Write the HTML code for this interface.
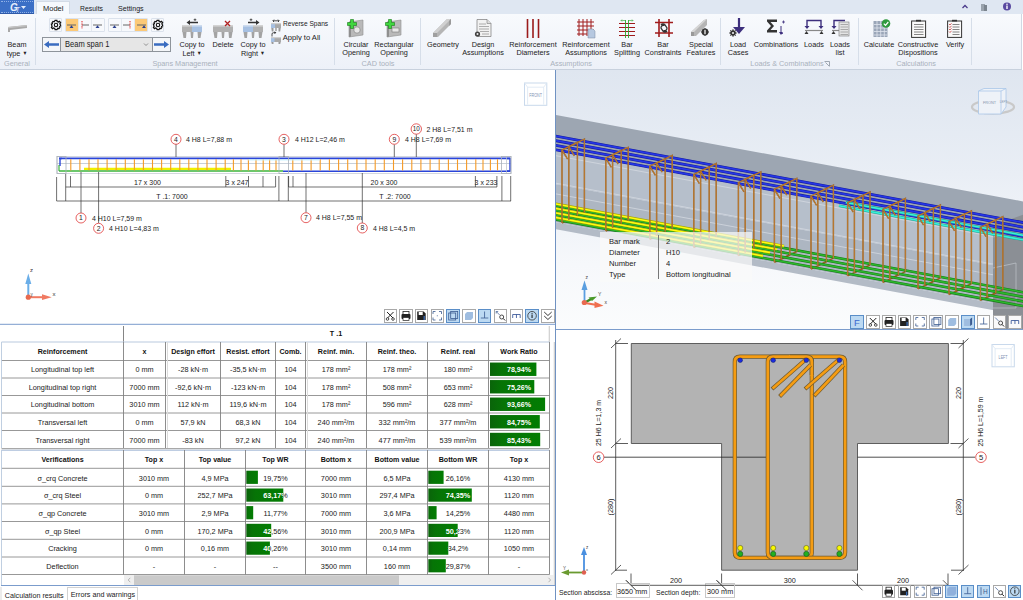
<!DOCTYPE html>
<html><head><meta charset="utf-8">
<style>
*{margin:0;padding:0;box-sizing:border-box}
html,body{width:1023px;height:600px;overflow:hidden;background:#fff;font-family:"Liberation Sans",sans-serif;color:#222}
.a{position:absolute}
.t{position:absolute;font-size:7.3px;white-space:nowrap;line-height:8px}
.c{transform:translateX(-50%) scaleX(0.9);text-align:center;font-size:8.1px}
svg{position:absolute;overflow:visible}

</style></head>
<body>
<div class="a" style="left:0;top:0;width:1023px;height:14px;background:#dfe7f2"></div>
<div class="a" style="left:0;top:0;width:34px;height:14px;background:#3b6fc6;border-bottom:1px solid #2f5aa8"></div>
<div class="a" style="left:1px;top:1px;width:32px;height:12px;border-top:1px dotted #8fb0e6;border-bottom:1px dotted #8fb0e6"></div>
<svg style="left:0;top:0" width="34" height="14"><text x="10" y="11" font-family="Liberation Sans" font-style="italic" font-weight="bold" font-size="10" fill="#e6eefc">G</text><text x="15.5" y="12" font-family="Liberation Sans" font-style="italic" font-size="7" fill="#e6eefc">T</text><path d="M21 6 L26 6 L23.5 9 Z" fill="#e6eefc"/></svg>
<div class="a" style="left:36px;top:1px;width:34px;height:14px;background:#f6f9fd;border:1px solid #d3dbe6;border-bottom:none"></div>
<div class="t" style="left:43px;top:5px;font-size:7.5px;color:#222">Model</div>
<div class="t" style="left:80px;top:5px;font-size:6.8px;letter-spacing:0.05px;color:#222">Results</div>
<div class="t" style="left:118px;top:5px;font-size:7.1px;color:#222">Settings</div>
<svg style="left:960px;top:2px" width="60" height="11"><path d="M2.5 6 L5 3.5 L7.5 6" stroke="#4a3a8a" stroke-width="1.3" fill="none"/><rect x="21" y="2" width="4" height="7" fill="#9aa3ad"/><rect x="24" y="3" width="3" height="6" fill="#7b848e"/><circle cx="47" cy="4.5" r="4" fill="#5a4aa0"/><rect x="46.3" y="3.5" width="1.4" height="3.5" fill="#fff"/><circle cx="47" cy="2.3" r="0.8" fill="#fff"/></svg>
<div class="a" style="left:0;top:14px;width:1022px;height:56px;background:linear-gradient(#f8fafd,#edf1f8);border-bottom:1px solid #c8d1dd;border-right:1px solid #d0d8e3"></div>
<div class="a" style="left:35px;top:18px;width:1px;height:47px;background:#d6dee9"></div>
<div class="a" style="left:334px;top:18px;width:1px;height:47px;background:#d6dee9"></div>
<div class="a" style="left:420px;top:18px;width:1px;height:47px;background:#d6dee9"></div>
<div class="a" style="left:720px;top:18px;width:1px;height:47px;background:#d6dee9"></div>
<div class="a" style="left:858px;top:18px;width:1px;height:47px;background:#d6dee9"></div>
<div class="a" style="left:971px;top:18px;width:1px;height:47px;background:#d6dee9"></div>
<div class="t c" style="left:17px;top:59px;color:#a9b1bc;margin-top:0.6px">General</div>
<div class="t c" style="left:185px;top:59px;color:#a9b1bc;margin-top:0.6px">Spans Management</div>
<div class="t c" style="left:378px;top:59px;color:#a9b1bc;margin-top:0.6px">CAD tools</div>
<div class="t c" style="left:571px;top:59px;color:#a9b1bc;margin-top:0.6px">Assumptions</div>
<div class="t c" style="left:787px;top:59px;color:#a9b1bc;margin-top:0.6px">Loads &amp; Combinations</div>
<svg style="left:824px;top:61px" width="6" height="6"><path d="M0.5 0.5 H5.5 V5.5" stroke="#8a94a0" stroke-width="0.8" fill="none"/><path d="M1.5 1.5 L5 5" stroke="#8a94a0" stroke-width="0.8"/></svg>
<div class="t c" style="left:916px;top:59px;color:#a9b1bc;margin-top:0.6px">Calculations</div>
<svg style="left:8px;top:24px" width="20" height="8"><path d="M0 3 L19 1 L19 4 L2 6 L2 8 L0 8 Z" fill="#a8a8a8"/><path d="M0 3 L19 1 L19 2.2 L0 4.2Z" fill="#c4c4c4"/></svg>
<div class="t c" style="left:17px;top:41px;">Beam</div>
<div class="t c" style="left:17px;top:48.8px;">type <span style="font-size:5.5px;vertical-align:1px">&#9660;</span></div>
<div class="a" style="left:49px;top:18px;width:13px;height:14px;background:#f7f9fc;border:1px solid #dbe2ec;border-radius:1px"></div>
<div class="a" style="left:65px;top:18px;width:40px;height:14px;background:#f7f9fc;border:1px solid #dbe2ec;border-radius:1px"></div>
<div class="a" style="left:66px;top:19px;width:12px;height:12px;background:#fcc977"></div>
<div class="a" style="left:78px;top:19px;width:1px;height:12px;background:#e3e8ef"></div>
<div class="a" style="left:91px;top:19px;width:1px;height:12px;background:#e3e8ef"></div>
<div class="a" style="left:108px;top:18px;width:40px;height:14px;background:#f7f9fc;border:1px solid #dbe2ec;border-radius:1px"></div>
<div class="a" style="left:135px;top:19px;width:12px;height:12px;background:#fcc977"></div>
<div class="a" style="left:121px;top:19px;width:1px;height:12px;background:#e3e8ef"></div>
<div class="a" style="left:134px;top:19px;width:1px;height:12px;background:#e3e8ef"></div>
<div class="a" style="left:151px;top:18px;width:13px;height:14px;background:#f7f9fc;border:1px solid #dbe2ec;border-radius:1px"></div>
<svg style="left:49.5px;top:18.5px" width="12" height="12" viewBox="-6 -6 12 12"><path d="M-0.9 -4.6 L0.9 -4.6 L1.2 -3.4 L2.3 -2.9 L3.4 -3.6 L4.6 -2.4 L3.9 -1.3 L4.3 -0.2 L4.6 0.9 L3.6 1.3 L3.9 2.4 L3.0 3.6 L1.9 3.3 L0.9 4.6 L-0.9 4.6 L-1.3 3.4 L-2.4 3.0 L-3.5 3.6 L-4.6 2.4 L-3.9 1.3 L-4.3 0.2 L-4.6 -0.9 L-3.6 -1.3 L-3.9 -2.4 L-3.0 -3.6 L-1.9 -3.2 Z" fill="none" stroke="#111" stroke-width="1.25"/><circle r="1.7" fill="none" stroke="#111" stroke-width="1.1"/></svg>
<svg style="left:151.5px;top:18.5px" width="12" height="12" viewBox="-6 -6 12 12"><path d="M-0.9 -4.6 L0.9 -4.6 L1.2 -3.4 L2.3 -2.9 L3.4 -3.6 L4.6 -2.4 L3.9 -1.3 L4.3 -0.2 L4.6 0.9 L3.6 1.3 L3.9 2.4 L3.0 3.6 L1.9 3.3 L0.9 4.6 L-0.9 4.6 L-1.3 3.4 L-2.4 3.0 L-3.5 3.6 L-4.6 2.4 L-3.9 1.3 L-4.3 0.2 L-4.6 -0.9 L-3.6 -1.3 L-3.9 -2.4 L-3.0 -3.6 L-1.9 -3.2 Z" fill="none" stroke="#111" stroke-width="1.25"/><circle r="1.7" fill="none" stroke="#111" stroke-width="1.1"/></svg>
<svg style="left:65px;top:19px" width="13" height="12"><path d="M2 6 H11" stroke="#666" stroke-width="1"/><path d="M4.5 9 L6.5 6.2 L8.5 9 Z" fill="#2a3f8f"/></svg>
<svg style="left:78px;top:19px" width="13" height="12"><path d="M4 6 H11" stroke="#666" stroke-width="1"/><path d="M4 2 V10" stroke="#e02020" stroke-width="1" stroke-dasharray="1 0.6"/></svg>
<svg style="left:91px;top:19px" width="13" height="12"><path d="M2 6 H11" stroke="#666" stroke-width="1"/><path d="M4.5 9 L6.5 6.2 L8.5 9 Z" fill="#2a3f8f"/></svg>
<svg style="left:108px;top:19px" width="13" height="12"><path d="M2 6 H11" stroke="#666" stroke-width="1"/><path d="M4.5 9 L6.5 6.2 L8.5 9 Z" fill="#2a3f8f"/></svg>
<svg style="left:121px;top:19px" width="13" height="12"><path d="M2 6 H9" stroke="#666" stroke-width="1"/><path d="M9 2 V10" stroke="#e02020" stroke-width="1" stroke-dasharray="1 0.6"/></svg>
<svg style="left:135px;top:19px" width="13" height="12"><path d="M2 6 H11" stroke="#666" stroke-width="1"/><path d="M7 9 L9 6.2 L11 9 Z" fill="#2a3f8f"/></svg>
<div class="a" style="left:42px;top:37px;width:129px;height:15px;border:1px solid #8e949b;background:#e6e6e6"></div>
<div class="a" style="left:43px;top:38px;width:18px;height:13px;background:#f4f6f9;border-right:1px solid #8e949b"></div>
<div class="a" style="left:152px;top:38px;width:18px;height:13px;background:#f4f6f9;border-left:1px solid #8e949b"></div>
<svg style="left:43px;top:38px" width="18" height="13"><path d="M1 6.5 L6 3 L6 5.3 L16 5.3 L16 7.7 L6 7.7 L6 10 Z" fill="#3a6cc0"/></svg>
<svg style="left:152px;top:38px" width="18" height="13"><path d="M17 6.5 L12 3 L12 5.3 L2 5.3 L2 7.7 L12 7.7 L12 10 Z" fill="#3a6cc0"/></svg>
<div class="t" style="left:65px;top:40.5px;font-size:8.2px;color:#222;transform:scaleX(0.92);transform-origin:0 0">Beam span 1</div>
<svg style="left:143px;top:42px" width="6" height="5"><path d="M1 1.5 L3 3.5 L5 1.5" stroke="#777" stroke-width="0.8" fill="none"/></svg>
<svg style="left:182px;top:19px" width="21" height="20"><rect x="0" y="6" width="20" height="7" fill="#b0b0b0"/><rect x="10" y="6" width="10" height="7" fill="#a6c0e2"/><rect x="0" y="6" width="20" height="1.6" fill="#fff" opacity="0.45"/><path d="M0.5 13 H4.5 L4 19 H1.5 Z" fill="#a3a3a3"/><path d="M8.5 13 H11.5 L11 19 H9 Z" fill="#a3a3a3"/><path d="M15.5 13 H19.5 L18.5 19 H16 Z" fill="#a3a3a3"/></svg>
<svg style="left:186px;top:18px" width="14" height="8"><path d="M0.5 4.5 L4 2 L4 3.8 L12 3.8 L12 5.2 L4 5.2 L4 7 Z" fill="#333"/><path d="M9 0.5 V3 M7.7 1.7 H10.3" stroke="#333" stroke-width="0.8"/></svg>
<svg style="left:213px;top:19px" width="21" height="20"><rect x="0" y="6" width="20" height="7" fill="#b0b0b0"/><rect x="0" y="6" width="20" height="1.6" fill="#fff" opacity="0.45"/><path d="M0.5 13 H4.5 L4 19 H1.5 Z" fill="#a3a3a3"/><path d="M8.5 13 H11.5 L11 19 H9 Z" fill="#a3a3a3"/><path d="M15.5 13 H19.5 L18.5 19 H16 Z" fill="#a3a3a3"/></svg>
<svg style="left:224px;top:20px" width="7" height="7"><path d="M1 1 L6 6 M6 1 L1 6" stroke="#b02020" stroke-width="1.3"/></svg>
<svg style="left:243px;top:19px" width="21" height="20"><rect x="0" y="6" width="20" height="7" fill="#b0b0b0"/><rect x="0" y="6" width="10" height="7" fill="#a6c0e2"/><rect x="0" y="6" width="20" height="1.6" fill="#fff" opacity="0.45"/><path d="M0.5 13 H4.5 L4 19 H1.5 Z" fill="#a3a3a3"/><path d="M8.5 13 H11.5 L11 19 H9 Z" fill="#a3a3a3"/><path d="M15.5 13 H19.5 L18.5 19 H16 Z" fill="#a3a3a3"/></svg>
<svg style="left:246px;top:18px" width="14" height="8"><path d="M13.5 4.5 L10 2 L10 3.8 L2 3.8 L2 5.2 L10 5.2 L10 7 Z" fill="#333"/><path d="M5 0.5 V3 M3.7 1.7 H6.3" stroke="#333" stroke-width="0.8"/></svg>
<div class="t c" style="left:192px;top:41px;">Copy to</div>
<div class="t c" style="left:192px;top:48.8px;">Left <span style="font-size:5.5px;vertical-align:1px">&#9660;</span></div>
<div class="t c" style="left:223px;top:41px;">Delete</div>
<div class="t c" style="left:253px;top:41px;">Copy to</div>
<div class="t c" style="left:253px;top:48.8px;">Right <span style="font-size:5.5px;vertical-align:1px">&#9660;</span></div>
<svg style="left:270px;top:18px" width="12" height="26"><rect x="1" y="6" width="10" height="4" fill="#a9a9a9"/><rect x="1" y="6" width="4" height="4" fill="#a6c0e2"/><rect x="1" y="5" width="10" height="1.2" fill="#cfcfcf"/><path d="M1.3 10 H3.5 V13.5 H1.8Z M8.5 10 H10.7 L10.2 13.5 H8.5Z M5.3 10 H6.7 V13 H5.3Z" fill="#9a9a9a"/><path d="M3 2.8 H9 M4 1.6 L2.8 2.8 L4 4 M8 1.6 L9.2 2.8 L8 4" stroke="#222" stroke-width="0.8" fill="none"/><rect x="1" y="20" width="10" height="4" fill="#a9a9a9"/><rect x="1" y="20" width="3.5" height="4" fill="#a6c0e2"/><rect x="1" y="19" width="10" height="1.2" fill="#cfcfcf"/><path d="M1.3 24 H3.5 V26 H1.8Z M8.5 24 H10.7 L10.2 26 H8.5Z" fill="#9a9a9a"/><path d="M2 18.5 V16 Q2 14.7 3.5 14.7 H5" stroke="#222" stroke-width="0.8" fill="none"/><path d="M4.5 13.3 L6.3 14.7 L4.5 16Z" fill="#222"/></svg>
<div class="t" style="left:282.5px;top:20px;font-size:7.6px;color:#222;transform:scaleX(0.87);transform-origin:0 0">Reverse Spans</div>
<div class="t" style="left:282.7px;top:33.5px;font-size:7.6px;color:#222">Apply to All</div>
<svg style="left:346px;top:19px" width="20" height="19"><path d="M3 3 L17 1 L17 16 L3 18 Z" fill="#b9b9b9" stroke="#8f8f8f" stroke-width="0.6"/><path d="M3 3 L5 2.5 L5 17.8 L3 18Z" fill="#8f8f8f"/><circle cx="11" cy="11" r="3.2" fill="#e8e8e8" stroke="#777" stroke-width="0.6"/><path d="M4.5 0.5 H7.5 V3.5 H10.5 V6.5 H7.5 V9.5 H4.5 V6.5 H1.5 V3.5 H4.5 Z" fill="#3fd63f" stroke="#1a7a1a" stroke-width="0.6"/></svg>
<svg style="left:384px;top:19px" width="20" height="19"><path d="M3 3 L17 1 L17 16 L3 18 Z" fill="#b9b9b9" stroke="#8f8f8f" stroke-width="0.6"/><path d="M3 3 L5 2.5 L5 17.8 L3 18Z" fill="#8f8f8f"/><rect x="8" y="9" width="7" height="4" fill="#e8e8e8" stroke="#777" stroke-width="0.6"/><path d="M4.5 0.5 H7.5 V3.5 H10.5 V6.5 H7.5 V9.5 H4.5 V6.5 H1.5 V3.5 H4.5 Z" fill="#3fd63f" stroke="#1a7a1a" stroke-width="0.6"/></svg>
<div class="t c" style="left:356px;top:41px;">Circular</div>
<div class="t c" style="left:356px;top:48.8px;">Opening</div>
<div class="t c" style="left:394px;top:41px;">Rectangular</div>
<div class="t c" style="left:394px;top:48.8px;">Opening</div>
<svg style="left:433px;top:19px" width="19" height="19"><path d="M0 14 L14 0 L18 0 L18 5 L5 18 L0 18Z" fill="#b5b5b5"/><path d="M0 14 L14 0 L18 0 L4 14 Z" fill="#d0d0d0"/><path d="M18 0 V5 L16 7 V2Z" fill="#9a9a9a"/><path d="M0 14 H4 V18 H0Z" fill="#a0a0a0"/></svg>
<div class="t c" style="left:443px;top:41px;">Geometry</div>
<svg style="left:474px;top:19px" width="20" height="19"><path d="M3 0.5 H13 L17 4.5 V17.5 H3 Z" fill="#f2f2f2" stroke="#7a7a7a" stroke-width="0.7"/><path d="M13 0.5 V4.5 H17" fill="#ddd" stroke="#7a7a7a" stroke-width="0.6"/><path d="M5 5 H12 M5 7.5 H15 M5 10 H15 M6 12.5 H15 M8 15 H15" stroke="#9a9a9a" stroke-width="0.8"/><circle cx="3.5" cy="15" r="2.6" fill="#444"/><circle cx="3.5" cy="15" r="1" fill="#eee"/></svg>
<div class="t c" style="left:483px;top:41px;">Design</div>
<div class="t c" style="left:483px;top:48.8px;">Assumptions</div>
<svg style="left:525px;top:19px" width="16" height="19"><path d="M2.5 0 V19 M8 0 V19 M13.5 0 V19" stroke="#9b1b1b" stroke-width="1.6"/></svg>
<div class="t c" style="left:533px;top:41px;">Reinforcement</div>
<div class="t c" style="left:533px;top:48.8px;">Diameters</div>
<svg style="left:577px;top:19px" width="19" height="19"><path d="M2 0 V17 M6 0 V17 M10 0 V17 M14 0 V12" stroke="#a01c1c" stroke-width="1"/><path d="M0 3 H17 M0 7 H17 M0 11 H17 M0 15 H10" stroke="#a01c1c" stroke-width="1"/><path d="M11 10 H16 L18 12 V19 H11Z" fill="#b6c8e0" stroke="#7a8aa0" stroke-width="0.5"/></svg>
<div class="t c" style="left:586px;top:41px;">Reinforcement</div>
<div class="t c" style="left:586px;top:48.8px;">Assumptions</div>
<svg style="left:618px;top:19px" width="19" height="19"><path d="M1 4.5 H17 M1 8.5 H17 M1 12.5 H17 M1 16.5 H17" stroke="#a01c1c" stroke-width="1"/><path d="M7.5 1 V19 M10.5 1 V19" stroke="#2aa82a" stroke-width="0.9"/><path d="M3 1.5 H7 M11 1.5 H15 M4 0.5 L3 1.5 L4 2.5 M14 0.5 L15 1.5 L14 2.5" stroke="#2aa82a" stroke-width="0.6" fill="none"/></svg>
<div class="t c" style="left:627px;top:41px;">Bar</div>
<div class="t c" style="left:627px;top:48.8px;">Splitting</div>
<svg style="left:655px;top:19px" width="19" height="19"><path d="M4 0 V18 M14 0 V18 M0 3.5 H18 M0 14 H18" stroke="#a01c1c" stroke-width="1.6"/><path d="M6 6 a2.5 2.5 0 0 1 4 0 l2 3 a2.5 2.5 0 0 1 -3.5 2.5 M12 12 a2.5 2.5 0 0 1 -4 0 l-2 -3 a2.5 2.5 0 0 1 3.5 -2.5" stroke="#333" stroke-width="1.3" fill="none"/></svg>
<div class="t c" style="left:663px;top:41px;">Bar</div>
<div class="t c" style="left:663px;top:48.8px;">Constraints</div>
<svg style="left:691px;top:19px" width="19" height="19"><path d="M0 13 L13 1 L16 0 L16 6 L5 17 L0 17Z" fill="#b5b5b5"/><path d="M0 13 L13 1 L16 0 L3 13Z" fill="#d6d6d6"/><path d="M0 13 H3 V17 H0Z" fill="#999"/><path d="M14 9 L18 13 L14 17 L10 13Z" fill="#333"/><circle cx="14" cy="13" r="3.4" fill="#333"/><rect x="13.4" y="10.8" width="1.2" height="4.4" fill="#fff"/></svg>
<div class="t c" style="left:701px;top:41px;">Special</div>
<div class="t c" style="left:701px;top:48.8px;">Features</div>
<svg style="left:728px;top:18px" width="20" height="20"><path d="M11 0 V10" stroke="#3d2f7d" stroke-width="2.2"/><path d="M5 9 H17 L11 16Z" fill="#3d2f7d"/><circle cx="5" cy="15" r="2.8" fill="#333"/><circle cx="5" cy="15" r="1.1" fill="#eee"/><path d="M5 11.2 V18.8 M1.2 15 H8.8 M2.3 12.3 L7.7 17.7 M7.7 12.3 L2.3 17.7" stroke="#333" stroke-width="1"/><circle cx="5" cy="15" r="1.1" fill="#eee"/></svg>
<div class="t c" style="left:738px;top:41px;">Load</div>
<div class="t c" style="left:738px;top:48.8px;">Cases</div>
<svg style="left:766px;top:18px" width="20" height="20"><path d="M1 1.5 H11 V4 H4.5 L8 8 L4.5 12 H11 V14.5 H1 V12.5 L5 8 L1 3.5Z" fill="#333"/><path d="M16 4 H19 M17.5 2.5 V5.5" stroke="#3d2f7d" stroke-width="0.8"/><path d="M14.5 15.5 H17" stroke="#3d2f7d" stroke-width="0.8"/><path d="M15 8 V15" stroke="#3d2f7d" stroke-width="1"/><path d="M13 14 H17 L15 17Z" fill="#3d2f7d"/></svg>
<div class="t c" style="left:776px;top:41px;">Combinations</div>
<svg style="left:804px;top:18px" width="20" height="20"><path d="M3 10 V2.5 H17 V10" stroke="#3d2f7d" stroke-width="1.4" fill="none"/><path d="M0.5 8 H5.5 L3 11Z M14.5 8 H19.5 L17 11Z" fill="#3d2f7d"/><path d="M1 12.5 H19" stroke="#888" stroke-width="1.2"/><path d="M0.5 16 L2.5 13 L4.5 16Z M15.5 16 L17.5 13 L19.5 16Z" fill="#333"/></svg>
<div class="t c" style="left:814px;top:41px;">Loads</div>
<svg style="left:831px;top:18px" width="20" height="20"><path d="M3 10 V2.5 H14" stroke="#3d2f7d" stroke-width="1.4" fill="none"/><path d="M0.5 8 H5.5 L3 11Z" fill="#3d2f7d"/><path d="M1 12.5 H9" stroke="#888" stroke-width="1.2"/><path d="M0.5 16 L2.5 13 L4.5 16Z" fill="#333"/><rect x="8" y="4" width="10" height="14" fill="#e4e4e4" stroke="#777" stroke-width="0.6"/><path d="M9.5 6.5 H17 M9.5 9 H17 M9.5 11.5 H17 M9.5 14 H17 M9.5 16.5 H17" stroke="#999" stroke-width="0.8"/></svg>
<div class="t c" style="left:840px;top:41px;">Loads</div>
<div class="t c" style="left:840px;top:48.8px;">list</div>
<svg style="left:873px;top:19px" width="18" height="19"><rect x="0.5" y="2" width="14" height="16" fill="#9aa6b8"/><path d="M1 5.5 H14 M1 9 H14 M1 12.5 H14 M1 16 H14 M4 2 V18 M7.7 2 V18 M11.3 2 V18" stroke="#dfe5ee" stroke-width="0.8"/><circle cx="13" cy="4.5" r="4.3" fill="#2e9a3e"/><path d="M10.8 4.6 L12.5 6.3 L15.3 3" stroke="#fff" stroke-width="1.2" fill="none"/></svg>
<div class="t c" style="left:879px;top:41px;">Calculate</div>
<svg style="left:911px;top:19px" width="16" height="19"><rect x="0.6" y="2" width="14" height="16.4" fill="#fafafa" stroke="#333" stroke-width="1"/><path d="M5 2.5 H10 V0.8 H5Z" fill="#333"/><path d="M3 5.5 H12.5" stroke="#777" stroke-width="0.9"/><path d="M3 8 H12.5" stroke="#777" stroke-width="0.9"/><path d="M3 10.5 H12.5" stroke="#777" stroke-width="0.9"/><path d="M3 13 H12.5" stroke="#777" stroke-width="0.9"/><path d="M3 15.5 H12.5" stroke="#777" stroke-width="0.9"/></svg>
<div class="t c" style="left:918px;top:41px;">Constructive</div>
<div class="t c" style="left:918px;top:48.8px;">Dispositions</div>
<svg style="left:947px;top:19px" width="16" height="19"><rect x="0.6" y="2" width="14" height="16.4" fill="#fafafa" stroke="#333" stroke-width="1"/><path d="M5 2.5 H10 V0.8 H5Z" fill="#333"/><path d="M5.5 5.5 H12.5" stroke="#777" stroke-width="0.9"/><path d="M2 5.0 L3 6.0 L4.5 4.3" stroke="#c02020" stroke-width="0.7" fill="none"/><path d="M5.5 8 H12.5" stroke="#777" stroke-width="0.9"/><path d="M2 7.5 L3 8.5 L4.5 6.8" stroke="#c02020" stroke-width="0.7" fill="none"/><path d="M5.5 10.5 H12.5" stroke="#777" stroke-width="0.9"/><path d="M2 10.0 L3 11.0 L4.5 9.3" stroke="#c02020" stroke-width="0.7" fill="none"/><path d="M5.5 13 H12.5" stroke="#777" stroke-width="0.9"/><path d="M2 12.5 L3 13.5 L4.5 11.8" stroke="#c02020" stroke-width="0.7" fill="none"/><path d="M5.5 15.5 H12.5" stroke="#777" stroke-width="0.9"/></svg>
<div class="t c" style="left:955px;top:41px;">Verify</div>
<div class="a" style="left:0;top:70px;width:555px;height:254px;background:#fff"></div>
<svg style="left:0;top:0" width="555" height="325" font-family="Liberation Sans"><rect x="57" y="156.5" width="454" height="17" fill="#fff" stroke="#c9ced6" stroke-width="0.8"/><path d="M57 163.5 H511" stroke="#b9c3cf" stroke-width="0.8"/><path d="M59 158.3 H510" stroke="#2a45d8" stroke-width="1.8"/><path d="M60 166 V158.5 H62" stroke="#2a45d8" stroke-width="1.4" fill="none"/><path d="M507 158.5 H510 V171 H507" stroke="#2a45d8" stroke-width="1.4" fill="none"/><path d="M84 168.9 H231" stroke="#f0f000" stroke-width="2.3"/><path d="M59 171 H283" stroke="#3cb43c" stroke-width="1.3"/><path d="M59 171 V165" stroke="#3cb43c" stroke-width="1.2"/><path d="M283 171.2 H510" stroke="#2a45d8" stroke-width="1.6"/><path d="M70.8 159.3 V170.4" stroke="#f59a25" stroke-width="1.1"/><path d="M79.9 159.3 V170.4" stroke="#f59a25" stroke-width="1.1"/><path d="M89.0 159.3 V170.4" stroke="#f59a25" stroke-width="1.1"/><path d="M98.0 159.3 V170.4" stroke="#f59a25" stroke-width="1.1"/><path d="M107.1 159.3 V170.4" stroke="#f59a25" stroke-width="1.1"/><path d="M116.2 159.3 V170.4" stroke="#f59a25" stroke-width="1.1"/><path d="M125.3 159.3 V170.4" stroke="#f59a25" stroke-width="1.1"/><path d="M134.4 159.3 V170.4" stroke="#f59a25" stroke-width="1.1"/><path d="M143.4 159.3 V170.4" stroke="#f59a25" stroke-width="1.1"/><path d="M152.5 159.3 V170.4" stroke="#f59a25" stroke-width="1.1"/><path d="M161.6 159.3 V170.4" stroke="#f59a25" stroke-width="1.1"/><path d="M170.7 159.3 V170.4" stroke="#f59a25" stroke-width="1.1"/><path d="M179.8 159.3 V170.4" stroke="#f59a25" stroke-width="1.1"/><path d="M188.8 159.3 V170.4" stroke="#f59a25" stroke-width="1.1"/><path d="M197.9 159.3 V170.4" stroke="#f59a25" stroke-width="1.1"/><path d="M207.0 159.3 V170.4" stroke="#f59a25" stroke-width="1.1"/><path d="M216.1 159.3 V170.4" stroke="#f59a25" stroke-width="1.1"/><path d="M225.2 159.3 V170.4" stroke="#f59a25" stroke-width="1.1"/><path d="M233.4 159.3 V170.4" stroke="#f59a25" stroke-width="1.1"/><path d="M241.0 159.3 V170.4" stroke="#f59a25" stroke-width="1.1"/><path d="M248.4 159.3 V170.4" stroke="#f59a25" stroke-width="1.1"/><path d="M256.0 159.3 V170.4" stroke="#f59a25" stroke-width="1.1"/><path d="M263.2 159.3 V170.4" stroke="#f59a25" stroke-width="1.1"/><path d="M269.6 159.3 V170.4" stroke="#f59a25" stroke-width="1.1"/><path d="M276.0 159.3 V170.4" stroke="#f59a25" stroke-width="1.1"/><path d="M292.8 159.3 V170.4" stroke="#f59a25" stroke-width="1.1"/><path d="M301.9 159.3 V170.4" stroke="#f59a25" stroke-width="1.1"/><path d="M311.1 159.3 V170.4" stroke="#f59a25" stroke-width="1.1"/><path d="M320.2 159.3 V170.4" stroke="#f59a25" stroke-width="1.1"/><path d="M329.4 159.3 V170.4" stroke="#f59a25" stroke-width="1.1"/><path d="M338.6 159.3 V170.4" stroke="#f59a25" stroke-width="1.1"/><path d="M347.7 159.3 V170.4" stroke="#f59a25" stroke-width="1.1"/><path d="M356.9 159.3 V170.4" stroke="#f59a25" stroke-width="1.1"/><path d="M366.0 159.3 V170.4" stroke="#f59a25" stroke-width="1.1"/><path d="M375.2 159.3 V170.4" stroke="#f59a25" stroke-width="1.1"/><path d="M384.3 159.3 V170.4" stroke="#f59a25" stroke-width="1.1"/><path d="M393.5 159.3 V170.4" stroke="#f59a25" stroke-width="1.1"/><path d="M402.6 159.3 V170.4" stroke="#f59a25" stroke-width="1.1"/><path d="M411.8 159.3 V170.4" stroke="#f59a25" stroke-width="1.1"/><path d="M420.9 159.3 V170.4" stroke="#f59a25" stroke-width="1.1"/><path d="M430.1 159.3 V170.4" stroke="#f59a25" stroke-width="1.1"/><path d="M439.2 159.3 V170.4" stroke="#f59a25" stroke-width="1.1"/><path d="M448.4 159.3 V170.4" stroke="#f59a25" stroke-width="1.1"/><path d="M457.5 159.3 V170.4" stroke="#f59a25" stroke-width="1.1"/><path d="M466.6 159.3 V170.4" stroke="#f59a25" stroke-width="1.1"/><path d="M475.8 159.3 V170.4" stroke="#f59a25" stroke-width="1.1"/><path d="M483.0 159.3 V170.4" stroke="#f59a25" stroke-width="1.1"/><path d="M490.4 159.3 V170.4" stroke="#f59a25" stroke-width="1.1"/><path d="M497.5 159.3 V170.4" stroke="#f59a25" stroke-width="1.1"/><path d="M248 159.9 H320" stroke="#bfefff" stroke-width="1"/><rect x="57" y="156.5" width="9" height="17" fill="none" stroke="#a9b0b8" stroke-width="0.8"/><rect x="279" y="156.5" width="9.5" height="17" fill="none" stroke="#a9b0b8" stroke-width="0.8"/><rect x="501.5" y="156.5" width="9.5" height="17" fill="none" stroke="#a9b0b8" stroke-width="0.8"/><path d="M506.5 157 V173" stroke="#b9c0c8" stroke-width="0.7"/><path d="M65.7 187 H275.6 M288.6 187 H497 M56.6 201 H511" stroke="#333" stroke-width="0.7" fill="none"/><path d="M56.6 177 V201" stroke="#333" stroke-width="0.7"/><path d="M65.7 174 V201" stroke="#333" stroke-width="0.7"/><path d="M70.5 176 V187" stroke="#333" stroke-width="0.7"/><path d="M225.8 176 V187" stroke="#333" stroke-width="0.7"/><path d="M248.5 176 V187" stroke="#333" stroke-width="0.7"/><path d="M263 176 V187" stroke="#333" stroke-width="0.7"/><path d="M275.6 176 V187" stroke="#333" stroke-width="0.7"/><path d="M278.9 176 V201" stroke="#333" stroke-width="0.7"/><path d="M288.3 176 V201" stroke="#333" stroke-width="0.7"/><path d="M288.6 176 V187" stroke="#333" stroke-width="0.7"/><path d="M293 176 V187" stroke="#333" stroke-width="0.7"/><path d="M475.4 176 V187" stroke="#333" stroke-width="0.7"/><path d="M496.9 176 V187" stroke="#333" stroke-width="0.7"/><path d="M501.9 176 V201" stroke="#333" stroke-width="0.7"/><path d="M510.7 176 V201" stroke="#333" stroke-width="0.7"/><text transform="translate(147.5,184.7) scale(0.946,1)" font-size="7.4" text-anchor="middle" fill="#222">17 x 300</text><text transform="translate(237,184.7) scale(0.946,1)" font-size="7.4" text-anchor="middle" fill="#222">3 x 247</text><text transform="translate(172,198.7) scale(0.946,1)" font-size="7.4" text-anchor="middle" fill="#222">T .1: 7000</text><text transform="translate(384,184.7) scale(0.946,1)" font-size="7.4" text-anchor="middle" fill="#222">20 x 300</text><text transform="translate(486,184.7) scale(0.946,1)" font-size="7.4" text-anchor="middle" fill="#222">3 x 233</text><text transform="translate(395,198.7) scale(0.946,1)" font-size="7.4" text-anchor="middle" fill="#222">T .2: 7000</text><path d="M176 144 V157 M284 144.5 V157 M394.3 144.5 V157 M416.3 134 V157" stroke="#333" stroke-width="0.7"/><path d="M81 172 V213 M98.6 172 V223 M306 173 V212.5 M362.3 173 V223" stroke="#333" stroke-width="0.7"/><circle cx="176" cy="139.3" r="5" fill="#fff" stroke="#e03a3a" stroke-width="0.8"/><text x="176" y="141.70000000000002" font-size="6.8" text-anchor="middle" fill="#222">4</text><text transform="translate(186,142.0) scale(0.946,1)" font-size="7.4" fill="#222">4 H8 L=7,88 m</text><circle cx="284" cy="139.3" r="5" fill="#fff" stroke="#e03a3a" stroke-width="0.8"/><text x="284" y="141.70000000000002" font-size="6.8" text-anchor="middle" fill="#222">3</text><text transform="translate(295,142.0) scale(0.946,1)" font-size="7.4" fill="#222">4 H12 L=2,46 m</text><circle cx="394.3" cy="139.3" r="5" fill="#fff" stroke="#e03a3a" stroke-width="0.8"/><text x="394.3" y="141.70000000000002" font-size="6.8" text-anchor="middle" fill="#222">9</text><text transform="translate(405,142.0) scale(0.946,1)" font-size="7.4" fill="#222">4 H8 L=7,69 m</text><circle cx="416.3" cy="129" r="5.2" fill="#fff" stroke="#e03a3a" stroke-width="0.8"/><text x="416.3" y="131.4" font-size="6.3" text-anchor="middle" fill="#222">10</text><text transform="translate(426.5,131.7) scale(0.946,1)" font-size="7.4" fill="#222">2 H8 L=7,51 m</text><circle cx="81" cy="218" r="5" fill="#fff" stroke="#e03a3a" stroke-width="0.8"/><text x="81" y="220.4" font-size="6.8" text-anchor="middle" fill="#222">1</text><text transform="translate(92,220.7) scale(0.946,1)" font-size="7.4" fill="#222">4 H10 L=7,59 m</text><circle cx="98.6" cy="228.3" r="5" fill="#fff" stroke="#e03a3a" stroke-width="0.8"/><text x="98.6" y="230.70000000000002" font-size="6.8" text-anchor="middle" fill="#222">2</text><text transform="translate(109,231.0) scale(0.946,1)" font-size="7.4" fill="#222">4 H10 L=4,83 m</text><circle cx="306" cy="217.7" r="5" fill="#fff" stroke="#e03a3a" stroke-width="0.8"/><text x="306" y="220.1" font-size="6.8" text-anchor="middle" fill="#222">7</text><text transform="translate(316,220.39999999999998) scale(0.946,1)" font-size="7.4" fill="#222">4 H8 L=7,55 m</text><circle cx="362.3" cy="228" r="5" fill="#fff" stroke="#e03a3a" stroke-width="0.8"/><text x="362.3" y="230.4" font-size="6.8" text-anchor="middle" fill="#222">8</text><text transform="translate(373,230.7) scale(0.946,1)" font-size="7.4" fill="#222">4 H8 L=4,5 m</text><path d="M28.3 296 V283" stroke="#6aaee8" stroke-width="2"/><path d="M25.3 284 L28.3 273.5 L31.3 284Z" fill="#6aaee8"/><path d="M29 297.2 H43" stroke="#f07a62" stroke-width="2"/><path d="M42 294.3 L51.7 297.2 L42 300Z" fill="#f07a62"/><circle cx="28.3" cy="297.2" r="2.6" fill="#e8694e"/><text x="30" y="272" font-size="6" fill="#333">z</text><text x="52.5" y="296" font-size="6" fill="#333">x</text><text x="30.5" y="295.5" font-size="4.5" fill="#444">y</text><rect x="524.5" y="83" width="22.3" height="22.3" fill="#fff" stroke="#c9d9ec" stroke-width="1"/><path d="M527.6 87.2 H543.7 V104.5 M527.6 87.2 V104.5 M524.5 83 L527.6 87.2 M546.8 83 L543.7 87.2" fill="none" stroke="#dbe6f3" stroke-width="0.8"/><text x="535.6" y="97.3" font-size="4.6" text-anchor="middle" fill="#7f93b3" transform="translate(535.6,0) scale(0.8,1) translate(-535.6,0)">FRONT</text></svg>
<div class="a" style="left:383.5px;top:309px;width:13.5px;height:13.5px;background:#fff;border:1px solid #a8a8a8"></div>
<div class="a" style="left:399px;top:309px;width:13.5px;height:13.5px;background:#fff;border:1px solid #a8a8a8"></div>
<div class="a" style="left:414.7px;top:309px;width:13.5px;height:13.5px;background:#fff;border:1px solid #a8a8a8"></div>
<div class="a" style="left:430.5px;top:309px;width:13.5px;height:13.5px;background:#fff;border:1px solid #a8a8a8"></div>
<div class="a" style="left:446.2px;top:309px;width:13.5px;height:13.5px;background:#bcd9f2;border:1px solid #5a8ec8"></div>
<div class="a" style="left:462px;top:309px;width:13.5px;height:13.5px;background:#fff;border:1px solid #a8a8a8"></div>
<div class="a" style="left:477.8px;top:309px;width:13.5px;height:13.5px;background:#bcd9f2;border:1px solid #5a8ec8"></div>
<div class="a" style="left:493.7px;top:309px;width:13.5px;height:13.5px;background:#fff;border:1px solid #a8a8a8"></div>
<div class="a" style="left:509.7px;top:309px;width:13.5px;height:13.5px;background:#fff;border:1px solid #a8a8a8"></div>
<div class="a" style="left:525.3px;top:309px;width:13.5px;height:13.5px;background:#bcd9f2;border:1px solid #5a8ec8"></div>
<div class="a" style="left:541.2px;top:309px;width:13.5px;height:13.5px;background:#fff;border:1px solid #a8a8a8"></div>
<svg style="left:0;top:0" width="560" height="330"><path d="M387.0 312 L393.0 318 M393.5 312 L387.5 318" stroke="#222" stroke-width="1"/><circle cx="387.5" cy="319" r="1.3" fill="none" stroke="#222" stroke-width="0.8"/><circle cx="393.0" cy="319" r="1.3" fill="none" stroke="#222" stroke-width="0.8"/><rect x="401.5" y="314" width="9" height="5" rx="1" fill="#222"/><rect x="403" y="311.5" width="6" height="3" fill="none" stroke="#222" stroke-width="0.8"/><rect x="403" y="317.5" width="6" height="3" fill="#fff" stroke="#222" stroke-width="0.7"/><path d="M417.2 311.5 H423.7 L425.7 313.5 V320 H417.2Z" fill="#222"/><rect x="418.7" y="312" width="4" height="3" fill="#fff"/><path d="M424.2 316 V320" stroke="#3a70c0" stroke-width="1.2"/><path d="M433.0 314 V311.5 H435.5 M439.0 311.5 H441.5 V314 M441.5 317.5 V320 H439.0 M435.5 320 H433.0 V317.5" stroke="#3a5a90" stroke-width="0.8" fill="none"/><circle cx="437.25" cy="315.75" r="0.5" fill="#3a5a90"/><rect x="448.7" y="313" width="7" height="7" fill="none" stroke="#3a5a90" stroke-width="0.8"/><rect x="450.7" y="311.5" width="7" height="7" fill="none" stroke="#3a5a90" stroke-width="0.8"/><path d="M465 314 L467 312 H473 V318 L471 320 H465Z" fill="#9fbde0"/><path d="M484.55 311.5 V318 M480.8 318 H488.3" stroke="#3a5a90" stroke-width="0.8"/><path d="M496.2 311.5 L499.7 315 M496.2 311.5 H498.2 M496.2 311.5 V313.5" stroke="#3a5a90" stroke-width="0.7" fill="none"/><circle cx="501.7" cy="317" r="2" fill="none" stroke="#222" stroke-width="0.8"/><path d="M503.2 318.5 L505.2 320.5" stroke="#222" stroke-width="1"/><path d="M512.7 318 V314.5 H520.2 V318 M516.45 314.5 V318" stroke="#2a4a90" stroke-width="0.8" fill="none"/><circle cx="532.05" cy="315.75" r="4.3" fill="none" stroke="#333" stroke-width="0.8"/><rect x="531.5" y="314.5" width="1.1" height="3.5" fill="#222"/><circle cx="532.05" cy="313.3" r="0.6" fill="#222"/><path d="M544.2 312 L547.95 315.5 L551.7 312 M544.2 316 L547.95 319.5 L551.7 316" stroke="#222" stroke-width="0.9" fill="none"/></svg>
<div class="a" style="left:0;top:323.5px;width:555px;height:1px;background:#7b9ccc"></div>
<svg style="left:0;top:0" width="556" height="600" font-family="Liberation Sans"><rect x="0" y="324" width="555" height="276" fill="#fff"/><path d="M0 324.3 H555" stroke="#7b9ccc" stroke-width="1"/><path d="M123.5 326 V342" stroke="#777" stroke-width="0.9"/><path d="M549.3 326 V342" stroke="#cfcfcf" stroke-width="1.2"/><path d="M554.3 342 V585" stroke="#b8b8b8" stroke-width="0.8"/><text x="336" y="335.5" font-size="7.2" font-weight="bold" text-anchor="middle" fill="#111">T .1</text><path d="M1.5 342 H549.5" stroke="#b9c9de" stroke-width="1"/><path d="M1.5 360.5 H549.5" stroke="#8c8c8c" stroke-width="0.9"/><path d="M1.5 378 H549.5" stroke="#8c8c8c" stroke-width="0.9"/><path d="M1.5 395.5 H549.5" stroke="#8c8c8c" stroke-width="0.9"/><path d="M1.5 413 H549.5" stroke="#8c8c8c" stroke-width="0.9"/><path d="M1.5 430.5 H549.5" stroke="#8c8c8c" stroke-width="0.9"/><path d="M1.5 448.6 H549.5" stroke="#a8a8a8" stroke-width="1.2"/><path d="M1.5 342 V448" stroke="#b9c9de" stroke-width="0.9"/><path d="M123.5 342 V448" stroke="#808080" stroke-width="0.9"/><path d="M165.5 342 V448" stroke="#808080" stroke-width="0.9"/><path d="M220.5 342 V448" stroke="#808080" stroke-width="0.9"/><path d="M275.5 342 V448" stroke="#808080" stroke-width="0.9"/><path d="M305.5 342 V448" stroke="#808080" stroke-width="0.9"/><path d="M366.5 342 V448" stroke="#808080" stroke-width="0.9"/><path d="M427.5 342 V448" stroke="#808080" stroke-width="0.9"/><path d="M488.5 342 V448" stroke="#808080" stroke-width="0.9"/><path d="M549.5 342 V448" stroke="#808080" stroke-width="0.9"/><path d="M167.5 342 V448" stroke="#dcdcdc" stroke-width="1"/><path d="M307.5 342 V448" stroke="#dcdcdc" stroke-width="1"/><text x="62.5" y="353.85" font-size="7.1" font-weight="bold" text-anchor="middle" fill="#111">Reinforcement</text><text x="144.5" y="353.85" font-size="7.1" font-weight="bold" text-anchor="middle" fill="#111">x</text><text x="193.0" y="353.85" font-size="7.1" font-weight="bold" text-anchor="middle" fill="#111">Design effort</text><text x="248.0" y="353.85" font-size="7.1" font-weight="bold" text-anchor="middle" fill="#111">Resist. effort</text><text x="290.5" y="353.85" font-size="7.1" font-weight="bold" text-anchor="middle" fill="#111">Comb.</text><text x="336.0" y="353.85" font-size="7.1" font-weight="bold" text-anchor="middle" fill="#111">Reinf. min.</text><text x="397.0" y="353.85" font-size="7.1" font-weight="bold" text-anchor="middle" fill="#111">Reinf. theo.</text><text x="458.0" y="353.85" font-size="7.1" font-weight="bold" text-anchor="middle" fill="#111">Reinf. real</text><text x="519.0" y="353.85" font-size="7.1" font-weight="bold" text-anchor="middle" fill="#111">Work Ratio</text><text transform="translate(62.5,372.45) scale(0.9,1)" font-size="8.1" text-anchor="middle" fill="#1a1a1a">Longitudinal top left</text><text transform="translate(144.5,372.45) scale(0.9,1)" font-size="8.1" text-anchor="middle" fill="#1a1a1a">0 mm</text><text transform="translate(193.0,372.45) scale(0.9,1)" font-size="8.1" text-anchor="middle" fill="#1a1a1a">-28 kN·m</text><text transform="translate(248.0,372.45) scale(0.9,1)" font-size="8.1" text-anchor="middle" fill="#1a1a1a">-35,5 kN·m</text><text transform="translate(290.5,372.45) scale(0.9,1)" font-size="8.1" text-anchor="middle" fill="#1a1a1a">104</text><text transform="translate(336.0,372.45) scale(0.9,1)" font-size="8.1" text-anchor="middle" fill="#1a1a1a">178 mm²</text><text transform="translate(397.0,372.45) scale(0.9,1)" font-size="8.1" text-anchor="middle" fill="#1a1a1a">178 mm²</text><text transform="translate(458.0,372.45) scale(0.9,1)" font-size="8.1" text-anchor="middle" fill="#1a1a1a">180 mm²</text><rect x="490" y="362.55" width="46.4" height="13.4" fill="url(#gbar)"/><text transform="translate(519.0,372.25) scale(0.9,1)" font-size="7.9" font-weight="bold" text-anchor="middle" fill="#fff">78,94%</text><text transform="translate(62.5,389.95) scale(0.9,1)" font-size="8.1" text-anchor="middle" fill="#1a1a1a">Longitudinal top right</text><text transform="translate(144.5,389.95) scale(0.9,1)" font-size="8.1" text-anchor="middle" fill="#1a1a1a">7000 mm</text><text transform="translate(193.0,389.95) scale(0.9,1)" font-size="8.1" text-anchor="middle" fill="#1a1a1a">-92,6 kN·m</text><text transform="translate(248.0,389.95) scale(0.9,1)" font-size="8.1" text-anchor="middle" fill="#1a1a1a">-123 kN·m</text><text transform="translate(290.5,389.95) scale(0.9,1)" font-size="8.1" text-anchor="middle" fill="#1a1a1a">104</text><text transform="translate(336.0,389.95) scale(0.9,1)" font-size="8.1" text-anchor="middle" fill="#1a1a1a">178 mm²</text><text transform="translate(397.0,389.95) scale(0.9,1)" font-size="8.1" text-anchor="middle" fill="#1a1a1a">508 mm²</text><text transform="translate(458.0,389.95) scale(0.9,1)" font-size="8.1" text-anchor="middle" fill="#1a1a1a">653 mm²</text><rect x="490" y="380.05" width="44.3" height="13.4" fill="url(#gbar)"/><text transform="translate(519.0,389.75) scale(0.9,1)" font-size="7.9" font-weight="bold" text-anchor="middle" fill="#fff">75,26%</text><text transform="translate(62.5,407.45) scale(0.9,1)" font-size="8.1" text-anchor="middle" fill="#1a1a1a">Longitudinal bottom</text><text transform="translate(144.5,407.45) scale(0.9,1)" font-size="8.1" text-anchor="middle" fill="#1a1a1a">3010 mm</text><text transform="translate(193.0,407.45) scale(0.9,1)" font-size="8.1" text-anchor="middle" fill="#1a1a1a">112 kN·m</text><text transform="translate(248.0,407.45) scale(0.9,1)" font-size="8.1" text-anchor="middle" fill="#1a1a1a">119,6 kN·m</text><text transform="translate(290.5,407.45) scale(0.9,1)" font-size="8.1" text-anchor="middle" fill="#1a1a1a">104</text><text transform="translate(336.0,407.45) scale(0.9,1)" font-size="8.1" text-anchor="middle" fill="#1a1a1a">178 mm²</text><text transform="translate(397.0,407.45) scale(0.9,1)" font-size="8.1" text-anchor="middle" fill="#1a1a1a">596 mm²</text><text transform="translate(458.0,407.45) scale(0.9,1)" font-size="8.1" text-anchor="middle" fill="#1a1a1a">628 mm²</text><rect x="490" y="397.55" width="55.1" height="13.4" fill="url(#gbar)"/><text transform="translate(519.0,407.25) scale(0.9,1)" font-size="7.9" font-weight="bold" text-anchor="middle" fill="#fff">93,66%</text><text transform="translate(62.5,424.95) scale(0.9,1)" font-size="8.1" text-anchor="middle" fill="#1a1a1a">Transversal left</text><text transform="translate(144.5,424.95) scale(0.9,1)" font-size="8.1" text-anchor="middle" fill="#1a1a1a">0 mm</text><text transform="translate(193.0,424.95) scale(0.9,1)" font-size="8.1" text-anchor="middle" fill="#1a1a1a">57,9 kN</text><text transform="translate(248.0,424.95) scale(0.9,1)" font-size="8.1" text-anchor="middle" fill="#1a1a1a">68,3 kN</text><text transform="translate(290.5,424.95) scale(0.9,1)" font-size="8.1" text-anchor="middle" fill="#1a1a1a">104</text><text transform="translate(336.0,424.95) scale(0.9,1)" font-size="8.1" text-anchor="middle" fill="#1a1a1a">240 mm²/m</text><text transform="translate(397.0,424.95) scale(0.9,1)" font-size="8.1" text-anchor="middle" fill="#1a1a1a">332 mm²/m</text><text transform="translate(458.0,424.95) scale(0.9,1)" font-size="8.1" text-anchor="middle" fill="#1a1a1a">377 mm²/m</text><rect x="490" y="415.05" width="49.8" height="13.4" fill="url(#gbar)"/><text transform="translate(519.0,424.75) scale(0.9,1)" font-size="7.9" font-weight="bold" text-anchor="middle" fill="#fff">84,75%</text><text transform="translate(62.5,442.7) scale(0.9,1)" font-size="8.1" text-anchor="middle" fill="#1a1a1a">Transversal right</text><text transform="translate(144.5,442.7) scale(0.9,1)" font-size="8.1" text-anchor="middle" fill="#1a1a1a">7000 mm</text><text transform="translate(193.0,442.7) scale(0.9,1)" font-size="8.1" text-anchor="middle" fill="#1a1a1a">-83 kN</text><text transform="translate(248.0,442.7) scale(0.9,1)" font-size="8.1" text-anchor="middle" fill="#1a1a1a">97,2 kN</text><text transform="translate(290.5,442.7) scale(0.9,1)" font-size="8.1" text-anchor="middle" fill="#1a1a1a">104</text><text transform="translate(336.0,442.7) scale(0.9,1)" font-size="8.1" text-anchor="middle" fill="#1a1a1a">240 mm²/m</text><text transform="translate(397.0,442.7) scale(0.9,1)" font-size="8.1" text-anchor="middle" fill="#1a1a1a">477 mm²/m</text><text transform="translate(458.0,442.7) scale(0.9,1)" font-size="8.1" text-anchor="middle" fill="#1a1a1a">539 mm²/m</text><rect x="490" y="432.8" width="50.2" height="13.4" fill="url(#gbar)"/><text transform="translate(519.0,442.5) scale(0.9,1)" font-size="7.9" font-weight="bold" text-anchor="middle" fill="#fff">85,43%</text><path d="M1.5 450.2 H549.5" stroke="#a9bdd8" stroke-width="1.1"/><path d="M1.5 468.3 H549.5" stroke="#8c8c8c" stroke-width="0.9"/><path d="M1.5 486.3 H549.5" stroke="#8c8c8c" stroke-width="0.9"/><path d="M1.5 503.9 H549.5" stroke="#8c8c8c" stroke-width="0.9"/><path d="M1.5 521.5 H549.5" stroke="#8c8c8c" stroke-width="0.9"/><path d="M1.5 539.3 H549.5" stroke="#8c8c8c" stroke-width="0.9"/><path d="M1.5 557 H549.5" stroke="#8c8c8c" stroke-width="0.9"/><path d="M1.5 574.5 H549.5" stroke="#8c8c8c" stroke-width="0.9"/><path d="M1.5 450 V574.5" stroke="#b9c9de" stroke-width="0.9"/><path d="M123.5 450 V574.5" stroke="#808080" stroke-width="0.9"/><path d="M184.5 450 V574.5" stroke="#808080" stroke-width="0.9"/><path d="M245.5 450 V574.5" stroke="#808080" stroke-width="0.9"/><path d="M305.5 450 V574.5" stroke="#808080" stroke-width="0.9"/><path d="M366.5 450 V574.5" stroke="#808080" stroke-width="0.9"/><path d="M427.5 450 V574.5" stroke="#808080" stroke-width="0.9"/><path d="M488.5 450 V574.5" stroke="#808080" stroke-width="0.9"/><path d="M549.5 450 V574.5" stroke="#808080" stroke-width="0.9"/><text x="62.5" y="461.75" font-size="7.1" font-weight="bold" text-anchor="middle" fill="#111">Verifications</text><text x="154.0" y="461.75" font-size="7.1" font-weight="bold" text-anchor="middle" fill="#111">Top x</text><text x="215.0" y="461.75" font-size="7.1" font-weight="bold" text-anchor="middle" fill="#111">Top value</text><text x="275.5" y="461.75" font-size="7.1" font-weight="bold" text-anchor="middle" fill="#111">Top WR</text><text x="336.0" y="461.75" font-size="7.1" font-weight="bold" text-anchor="middle" fill="#111">Bottom x</text><text x="397.0" y="461.75" font-size="7.1" font-weight="bold" text-anchor="middle" fill="#111">Bottom value</text><text x="458.0" y="461.75" font-size="7.1" font-weight="bold" text-anchor="middle" fill="#111">Bottom WR</text><text x="519.0" y="461.75" font-size="7.1" font-weight="bold" text-anchor="middle" fill="#111">Top x</text><text transform="translate(62.5,480.5) scale(0.9,1)" font-size="8.1" text-anchor="middle" fill="#1a1a1a">σ_crq Concrete</text><text transform="translate(154.0,480.5) scale(0.9,1)" font-size="8.1" text-anchor="middle" fill="#1a1a1a">3010 mm</text><text transform="translate(215.0,480.5) scale(0.9,1)" font-size="8.1" text-anchor="middle" fill="#1a1a1a">4,9 MPa</text><rect x="246.3" y="470.7" width="11.6" height="13.2" fill="url(#gbar)"/><g clip-path="url(#cd0)"><text transform="translate(275.5,480.5) scale(0.9,1)" font-size="8.1" text-anchor="middle" fill="#1a1a1a">19,75%</text></g><g clip-path="url(#cb0)"><text transform="translate(275.5,480.5) scale(0.9,1)" font-size="8.1" font-weight="bold" text-anchor="middle" fill="#fff">19,75%</text></g><text transform="translate(336.0,480.5) scale(0.9,1)" font-size="8.1" text-anchor="middle" fill="#1a1a1a">7000 mm</text><text transform="translate(397.0,480.5) scale(0.9,1)" font-size="8.1" text-anchor="middle" fill="#1a1a1a">6,5 MPa</text><rect x="428.3" y="470.7" width="15.3" height="13.2" fill="url(#gbar)"/><g clip-path="url(#cd1)"><text transform="translate(458.0,480.5) scale(0.9,1)" font-size="8.1" text-anchor="middle" fill="#1a1a1a">26,16%</text></g><g clip-path="url(#cb1)"><text transform="translate(458.0,480.5) scale(0.9,1)" font-size="8.1" font-weight="bold" text-anchor="middle" fill="#fff">26,16%</text></g><text transform="translate(519.0,480.5) scale(0.9,1)" font-size="8.1" text-anchor="middle" fill="#1a1a1a">4130 mm</text><text transform="translate(62.5,498.3) scale(0.9,1)" font-size="8.1" text-anchor="middle" fill="#1a1a1a">σ_crq Steel</text><text transform="translate(154.0,498.3) scale(0.9,1)" font-size="8.1" text-anchor="middle" fill="#1a1a1a">0 mm</text><text transform="translate(215.0,498.3) scale(0.9,1)" font-size="8.1" text-anchor="middle" fill="#1a1a1a">252,7 MPa</text><rect x="246.3" y="488.5" width="37.0" height="13.2" fill="url(#gbar)"/><g clip-path="url(#cd2)"><text transform="translate(275.5,498.3) scale(0.9,1)" font-size="8.1" text-anchor="middle" fill="#1a1a1a">63,17%</text></g><g clip-path="url(#cb2)"><text transform="translate(275.5,498.3) scale(0.9,1)" font-size="8.1" font-weight="bold" text-anchor="middle" fill="#fff">63,17%</text></g><text transform="translate(336.0,498.3) scale(0.9,1)" font-size="8.1" text-anchor="middle" fill="#1a1a1a">3010 mm</text><text transform="translate(397.0,498.3) scale(0.9,1)" font-size="8.1" text-anchor="middle" fill="#1a1a1a">297,4 MPa</text><rect x="428.3" y="488.5" width="43.5" height="13.2" fill="url(#gbar)"/><g clip-path="url(#cd3)"><text transform="translate(458.0,498.3) scale(0.9,1)" font-size="8.1" text-anchor="middle" fill="#1a1a1a">74,35%</text></g><g clip-path="url(#cb3)"><text transform="translate(458.0,498.3) scale(0.9,1)" font-size="8.1" font-weight="bold" text-anchor="middle" fill="#fff">74,35%</text></g><text transform="translate(519.0,498.3) scale(0.9,1)" font-size="8.1" text-anchor="middle" fill="#1a1a1a">1120 mm</text><text transform="translate(62.5,515.9000000000001) scale(0.9,1)" font-size="8.1" text-anchor="middle" fill="#1a1a1a">σ_qp Concrete</text><text transform="translate(154.0,515.9000000000001) scale(0.9,1)" font-size="8.1" text-anchor="middle" fill="#1a1a1a">3010 mm</text><text transform="translate(215.0,515.9000000000001) scale(0.9,1)" font-size="8.1" text-anchor="middle" fill="#1a1a1a">2,9 MPa</text><rect x="246.3" y="506.1" width="6.9" height="13.2" fill="url(#gbar)"/><g clip-path="url(#cd4)"><text transform="translate(275.5,515.9000000000001) scale(0.9,1)" font-size="8.1" text-anchor="middle" fill="#1a1a1a">11,77%</text></g><g clip-path="url(#cb4)"><text transform="translate(275.5,515.9000000000001) scale(0.9,1)" font-size="8.1" font-weight="bold" text-anchor="middle" fill="#fff">11,77%</text></g><text transform="translate(336.0,515.9000000000001) scale(0.9,1)" font-size="8.1" text-anchor="middle" fill="#1a1a1a">7000 mm</text><text transform="translate(397.0,515.9000000000001) scale(0.9,1)" font-size="8.1" text-anchor="middle" fill="#1a1a1a">3,6 MPa</text><rect x="428.3" y="506.1" width="8.3" height="13.2" fill="url(#gbar)"/><g clip-path="url(#cd5)"><text transform="translate(458.0,515.9000000000001) scale(0.9,1)" font-size="8.1" text-anchor="middle" fill="#1a1a1a">14,25%</text></g><g clip-path="url(#cb5)"><text transform="translate(458.0,515.9000000000001) scale(0.9,1)" font-size="8.1" font-weight="bold" text-anchor="middle" fill="#fff">14,25%</text></g><text transform="translate(519.0,515.9000000000001) scale(0.9,1)" font-size="8.1" text-anchor="middle" fill="#1a1a1a">4480 mm</text><text transform="translate(62.5,533.6) scale(0.9,1)" font-size="8.1" text-anchor="middle" fill="#1a1a1a">σ_qp Steel</text><text transform="translate(154.0,533.6) scale(0.9,1)" font-size="8.1" text-anchor="middle" fill="#1a1a1a">0 mm</text><text transform="translate(215.0,533.6) scale(0.9,1)" font-size="8.1" text-anchor="middle" fill="#1a1a1a">170,2 MPa</text><rect x="246.3" y="523.8" width="24.9" height="13.2" fill="url(#gbar)"/><g clip-path="url(#cd6)"><text transform="translate(275.5,533.6) scale(0.9,1)" font-size="8.1" text-anchor="middle" fill="#1a1a1a">42,56%</text></g><g clip-path="url(#cb6)"><text transform="translate(275.5,533.6) scale(0.9,1)" font-size="8.1" font-weight="bold" text-anchor="middle" fill="#fff">42,56%</text></g><text transform="translate(336.0,533.6) scale(0.9,1)" font-size="8.1" text-anchor="middle" fill="#1a1a1a">3010 mm</text><text transform="translate(397.0,533.6) scale(0.9,1)" font-size="8.1" text-anchor="middle" fill="#1a1a1a">200,9 MPa</text><rect x="428.3" y="523.8" width="29.4" height="13.2" fill="url(#gbar)"/><g clip-path="url(#cd7)"><text transform="translate(458.0,533.6) scale(0.9,1)" font-size="8.1" text-anchor="middle" fill="#1a1a1a">50,23%</text></g><g clip-path="url(#cb7)"><text transform="translate(458.0,533.6) scale(0.9,1)" font-size="8.1" font-weight="bold" text-anchor="middle" fill="#fff">50,23%</text></g><text transform="translate(519.0,533.6) scale(0.9,1)" font-size="8.1" text-anchor="middle" fill="#1a1a1a">1120 mm</text><text transform="translate(62.5,551.35) scale(0.9,1)" font-size="8.1" text-anchor="middle" fill="#1a1a1a">Cracking</text><text transform="translate(154.0,551.35) scale(0.9,1)" font-size="8.1" text-anchor="middle" fill="#1a1a1a">0 mm</text><text transform="translate(215.0,551.35) scale(0.9,1)" font-size="8.1" text-anchor="middle" fill="#1a1a1a">0,16 mm</text><rect x="246.3" y="541.55" width="23.6" height="13.2" fill="url(#gbar)"/><g clip-path="url(#cd8)"><text transform="translate(275.5,551.35) scale(0.9,1)" font-size="8.1" text-anchor="middle" fill="#1a1a1a">40,26%</text></g><g clip-path="url(#cb8)"><text transform="translate(275.5,551.35) scale(0.9,1)" font-size="8.1" font-weight="bold" text-anchor="middle" fill="#fff">40,26%</text></g><text transform="translate(336.0,551.35) scale(0.9,1)" font-size="8.1" text-anchor="middle" fill="#1a1a1a">3010 mm</text><text transform="translate(397.0,551.35) scale(0.9,1)" font-size="8.1" text-anchor="middle" fill="#1a1a1a">0,14 mm</text><rect x="428.3" y="541.55" width="20.0" height="13.2" fill="url(#gbar)"/><g clip-path="url(#cd9)"><text transform="translate(458.0,551.35) scale(0.9,1)" font-size="8.1" text-anchor="middle" fill="#1a1a1a">34,2%</text></g><g clip-path="url(#cb9)"><text transform="translate(458.0,551.35) scale(0.9,1)" font-size="8.1" font-weight="bold" text-anchor="middle" fill="#fff">34,2%</text></g><text transform="translate(519.0,551.35) scale(0.9,1)" font-size="8.1" text-anchor="middle" fill="#1a1a1a">1050 mm</text><text transform="translate(62.5,568.95) scale(0.9,1)" font-size="8.1" text-anchor="middle" fill="#1a1a1a">Deflection</text><text transform="translate(154.0,568.95) scale(0.9,1)" font-size="8.1" text-anchor="middle" fill="#1a1a1a">-</text><text transform="translate(215.0,568.95) scale(0.9,1)" font-size="8.1" text-anchor="middle" fill="#1a1a1a">-</text><text transform="translate(275.5,568.95) scale(0.9,1)" font-size="8.1" text-anchor="middle" fill="#1a1a1a">--</text><text transform="translate(336.0,568.95) scale(0.9,1)" font-size="8.1" text-anchor="middle" fill="#1a1a1a">3500 mm</text><text transform="translate(397.0,568.95) scale(0.9,1)" font-size="8.1" text-anchor="middle" fill="#1a1a1a">160 mm</text><rect x="428.3" y="559.15" width="17.5" height="13.2" fill="url(#gbar)"/><g clip-path="url(#cd10)"><text transform="translate(458.0,568.95) scale(0.9,1)" font-size="8.1" text-anchor="middle" fill="#1a1a1a">29,87%</text></g><g clip-path="url(#cb10)"><text transform="translate(458.0,568.95) scale(0.9,1)" font-size="8.1" font-weight="bold" text-anchor="middle" fill="#fff">29,87%</text></g><text transform="translate(519.0,568.95) scale(0.9,1)" font-size="8.1" text-anchor="middle" fill="#1a1a1a">-</text><defs><linearGradient id="gbar" x1="0" y1="0" x2="1" y2="0"><stop offset="0" stop-color="#0a640a"/><stop offset="0.25" stop-color="#067406"/><stop offset="1" stop-color="#027d02"/></linearGradient><clipPath id="cd0"><rect x="257.9" y="470.3" width="49.4" height="14"/></clipPath><clipPath id="cb0"><rect x="246.3" y="470.3" width="11.6" height="14"/></clipPath><clipPath id="cd1"><rect x="443.6" y="470.3" width="45.7" height="14"/></clipPath><clipPath id="cb1"><rect x="428.3" y="470.3" width="15.3" height="14"/></clipPath><clipPath id="cd2"><rect x="283.3" y="488.1" width="24.0" height="14"/></clipPath><clipPath id="cb2"><rect x="246.3" y="488.1" width="37.0" height="14"/></clipPath><clipPath id="cd3"><rect x="471.8" y="488.1" width="17.5" height="14"/></clipPath><clipPath id="cb3"><rect x="428.3" y="488.1" width="43.5" height="14"/></clipPath><clipPath id="cd4"><rect x="253.2" y="505.70000000000005" width="54.1" height="14"/></clipPath><clipPath id="cb4"><rect x="246.3" y="505.70000000000005" width="6.9" height="14"/></clipPath><clipPath id="cd5"><rect x="436.6" y="505.70000000000005" width="52.7" height="14"/></clipPath><clipPath id="cb5"><rect x="428.3" y="505.70000000000005" width="8.3" height="14"/></clipPath><clipPath id="cd6"><rect x="271.2" y="523.4" width="36.1" height="14"/></clipPath><clipPath id="cb6"><rect x="246.3" y="523.4" width="24.9" height="14"/></clipPath><clipPath id="cd7"><rect x="457.7" y="523.4" width="31.6" height="14"/></clipPath><clipPath id="cb7"><rect x="428.3" y="523.4" width="29.4" height="14"/></clipPath><clipPath id="cd8"><rect x="269.9" y="541.15" width="37.4" height="14"/></clipPath><clipPath id="cb8"><rect x="246.3" y="541.15" width="23.6" height="14"/></clipPath><clipPath id="cd9"><rect x="448.3" y="541.15" width="41.0" height="14"/></clipPath><clipPath id="cb9"><rect x="428.3" y="541.15" width="20.0" height="14"/></clipPath><clipPath id="cd10"><rect x="445.8" y="558.75" width="43.5" height="14"/></clipPath><clipPath id="cb10"><rect x="428.3" y="558.75" width="17.5" height="14"/></clipPath></defs><rect x="124" y="575" width="430" height="10" fill="#efefef"/><rect x="134" y="575.3" width="265" height="9.7" fill="#cacaca"/><path d="M130.3 577.8 L128.2 580 L130.3 582.2" stroke="#9a9a9a" stroke-width="0.7" fill="none"/><path d="M548.5 577.8 L550.6 580 L548.5 582.2" stroke="#9a9a9a" stroke-width="0.7" fill="none"/><path d="M1.5 574.5 V585.5" stroke="#b9c9de" stroke-width="0.9"/><path d="M1 585.5 H555" stroke="#7b9ccc" stroke-width="1"/><path d="M555.5 70 V600" stroke="#7092c2" stroke-width="1"/><path d="M1 587 V600" stroke="#d8d8d8" stroke-width="1"/><text transform="translate(4.8,597.6) scale(0.9,1)" font-size="8" fill="#222">Calculation results</text><rect x="67.5" y="587.5" width="70" height="13" fill="#fff" stroke="#d2d2d2" stroke-width="1"/><text transform="translate(70.8,596.6) scale(0.9,1)" font-size="8" fill="#222">Errors and warnings</text></svg>
<svg style="left:556px;top:70px" width="467" height="259" viewBox="556 70 467 259"><defs><linearGradient id="bg3" x1="0" y1="0" x2="0" y2="1"><stop offset="0" stop-color="#dfe6f0"/><stop offset="0.4" stop-color="#e9eef5"/><stop offset="0.75" stop-color="#f6f8fb"/><stop offset="1" stop-color="#fbfcfd"/></linearGradient><clipPath id="cl3"><rect x="556" y="70" width="467" height="259"/></clipPath></defs><rect x="556" y="70" width="467" height="259" fill="url(#bg3)"/><g clip-path="url(#cl3)"><path d="M550 113.9 L1030 202.7 L1030 238.8 L550 150.0 Z" fill="#9da6b2" opacity="1"/><path d="M550 150.0 L1030 238.8 L1030 271.9 L550 183.1 Z" fill="#b6bfcb" opacity="1"/><path d="M550 183.1 L1030 271.9 L1030 309.9 L550 221.1 Z" fill="#adb6c2" opacity="1"/><path d="M550 221.1 L1030 309.9 L1030 316.9 L550 228.1 Z" fill="#b3bbc6" opacity="1"/><path d="M550 154.6 L1030 243.4" stroke="#d8dde4" stroke-width="0.7" opacity="1"/><path d="M550 182.1 L1030 270.9" stroke="#d8dde4" stroke-width="0.7" opacity="1"/><path d="M550 192.8 L1030 281.6" stroke="#d8dde4" stroke-width="0.7" opacity="1"/><path d="M550 208.1 L1030 296.9" stroke="#c9d0d8" stroke-width="0.6" opacity="1"/><path d="M993 226 L1030 212 L1030 340 L993 340 Z" fill="#8b8f95"/><path d="M993 237 L1030 231 M993 268 L1016 263 V308 M993 308 H1016" stroke="#c9ced5" stroke-width="0.6" fill="none"/><path d="M568.8 219.7 L584.4 212.2" stroke="#9a6020" stroke-width="1.5"/><path d="M562.0 223.0 L577.4 215.6" stroke="#9a6020" stroke-width="1.5"/><path d="M612.6 227.8 L628.2 220.3" stroke="#9a6020" stroke-width="1.5"/><path d="M605.8 231.1 L621.2 223.7" stroke="#9a6020" stroke-width="1.5"/><path d="M656.6 236.0 L672.2 228.4" stroke="#9a6020" stroke-width="1.5"/><path d="M649.8 239.3 L665.2 231.8" stroke="#9a6020" stroke-width="1.5"/><path d="M700.6 244.1 L716.2 236.6" stroke="#9a6020" stroke-width="1.5"/><path d="M693.8 247.4 L709.2 239.9" stroke="#9a6020" stroke-width="1.5"/><path d="M745.2 252.4 L760.8 244.8" stroke="#9a6020" stroke-width="1.5"/><path d="M738.4 255.7 L753.8 248.2" stroke="#9a6020" stroke-width="1.5"/><path d="M781.2 259.0 L796.8 251.5" stroke="#9a6020" stroke-width="1.5"/><path d="M774.4 262.3 L789.8 254.8" stroke="#9a6020" stroke-width="1.5"/><path d="M817.8 265.8 L833.4 258.2" stroke="#9a6020" stroke-width="1.5"/><path d="M811.0 269.1 L826.4 261.6" stroke="#9a6020" stroke-width="1.5"/><path d="M854.4 272.6 L870.0 265.0" stroke="#9a6020" stroke-width="1.5"/><path d="M847.6 275.9 L863.0 268.4" stroke="#9a6020" stroke-width="1.5"/><path d="M889.8 279.1 L905.4 271.6" stroke="#9a6020" stroke-width="1.5"/><path d="M883.0 282.4 L898.4 274.9" stroke="#9a6020" stroke-width="1.5"/><path d="M924.8 285.6 L940.4 278.0" stroke="#9a6020" stroke-width="1.5"/><path d="M918.0 288.9 L933.4 281.4" stroke="#9a6020" stroke-width="1.5"/><path d="M955.8 291.3 L971.4 283.8" stroke="#9a6020" stroke-width="1.5"/><path d="M949.0 294.6 L964.4 287.1" stroke="#9a6020" stroke-width="1.5"/><path d="M987.2 297.1 L1002.8 289.6" stroke="#9a6020" stroke-width="1.5"/><path d="M980.4 300.4 L995.8 293.0" stroke="#9a6020" stroke-width="1.5"/><path d="M550.0 204.7 L1030.0 293.5" stroke="#177a17" stroke-width="2.6"/><path d="M550.0 204.7 L1030.0 293.5" stroke="#2cb82c" stroke-width="1.5"/><path d="M550.0 209.3 L1030.0 298.1" stroke="#177a17" stroke-width="2.6"/><path d="M550.0 209.3 L1030.0 298.1" stroke="#2cb82c" stroke-width="1.5"/><path d="M550.0 213.9 L1030.0 302.7" stroke="#177a17" stroke-width="2.6"/><path d="M550.0 213.9 L1030.0 302.7" stroke="#2cb82c" stroke-width="1.5"/><path d="M550.0 218.5 L1030.0 307.3" stroke="#177a17" stroke-width="2.6"/><path d="M550.0 218.5 L1030.0 307.3" stroke="#2cb82c" stroke-width="1.5"/><path d="M550.0 202.8 L784.0 246.1" stroke="#a8a800" stroke-width="2.6"/><path d="M550.0 202.8 L784.0 246.1" stroke="#ffff10" stroke-width="1.5"/><path d="M550.0 207.4 L777.0 249.3" stroke="#a8a800" stroke-width="2.6"/><path d="M550.0 207.4 L777.0 249.3" stroke="#ffff10" stroke-width="1.5"/><path d="M550.0 211.9 L770.0 252.6" stroke="#a8a800" stroke-width="2.6"/><path d="M550.0 211.9 L770.0 252.6" stroke="#ffff10" stroke-width="1.5"/><path d="M550.0 216.5 L763.0 255.9" stroke="#a8a800" stroke-width="2.6"/><path d="M550.0 216.5 L763.0 255.9" stroke="#ffff10" stroke-width="1.5"/><path d="M550.0 135.0 L1030.0 223.8" stroke="#141c9c" stroke-width="2.8"/><path d="M550.0 135.0 L1030.0 223.8" stroke="#2636e6" stroke-width="1.7"/><path d="M550.0 139.6 L1030.0 228.4" stroke="#141c9c" stroke-width="2.8"/><path d="M550.0 139.6 L1030.0 228.4" stroke="#2636e6" stroke-width="1.7"/><path d="M550.0 144.2 L1030.0 233.0" stroke="#141c9c" stroke-width="2.8"/><path d="M550.0 144.2 L1030.0 233.0" stroke="#2636e6" stroke-width="1.7"/><path d="M550.0 148.8 L1030.0 237.6" stroke="#141c9c" stroke-width="2.8"/><path d="M550.0 148.8 L1030.0 237.6" stroke="#2636e6" stroke-width="1.7"/><path d="M845.8 202.4 L1030.0 236.5" stroke="#18a898" stroke-width="2.6"/><path d="M845.8 202.4 L1030.0 236.5" stroke="#38f0d8" stroke-width="1.5"/><path d="M839.0 205.7 L1030.0 241.1" stroke="#18a898" stroke-width="2.6"/><path d="M839.0 205.7 L1030.0 241.1" stroke="#38f0d8" stroke-width="1.5"/><path d="M568.8 219.7 L568.8 146.7 L584.4 139.2 L584.4 212.2" fill="none" stroke="#9a6020" stroke-width="1.45"/><path d="M568.8 219.7 L568.8 146.7 L584.4 139.2 L584.4 212.2" fill="none" stroke="#cf8c40" stroke-width="0.6"/><path d="M568.8 146.7 L574.4 155.9" stroke="#9a6020" stroke-width="1.45"/><path d="M568.8 146.7 L574.4 155.9" stroke="#cf8c40" stroke-width="0.6"/><path d="M562.0 223.0 L562.0 150.0 L577.4 142.5 L577.4 215.6" fill="none" stroke="#9a6020" stroke-width="1.45"/><path d="M562.0 223.0 L562.0 150.0 L577.4 142.5 L577.4 215.6" fill="none" stroke="#cf8c40" stroke-width="0.6"/><path d="M562.0 150.0 L567.6 159.2" stroke="#9a6020" stroke-width="1.45"/><path d="M562.0 150.0 L567.6 159.2" stroke="#cf8c40" stroke-width="0.6"/><path d="M612.6 227.8 L612.6 154.8 L628.2 147.3 L628.2 220.3" fill="none" stroke="#9a6020" stroke-width="1.45"/><path d="M612.6 227.8 L612.6 154.8 L628.2 147.3 L628.2 220.3" fill="none" stroke="#cf8c40" stroke-width="0.6"/><path d="M612.6 154.8 L618.2 164.0" stroke="#9a6020" stroke-width="1.45"/><path d="M612.6 154.8 L618.2 164.0" stroke="#cf8c40" stroke-width="0.6"/><path d="M605.8 231.1 L605.8 158.1 L621.2 150.6 L621.2 223.7" fill="none" stroke="#9a6020" stroke-width="1.45"/><path d="M605.8 231.1 L605.8 158.1 L621.2 150.6 L621.2 223.7" fill="none" stroke="#cf8c40" stroke-width="0.6"/><path d="M605.8 158.1 L611.4 167.3" stroke="#9a6020" stroke-width="1.45"/><path d="M605.8 158.1 L611.4 167.3" stroke="#cf8c40" stroke-width="0.6"/><path d="M656.6 236.0 L656.6 163.0 L672.2 155.4 L672.2 228.4" fill="none" stroke="#9a6020" stroke-width="1.45"/><path d="M656.6 236.0 L656.6 163.0 L672.2 155.4 L672.2 228.4" fill="none" stroke="#cf8c40" stroke-width="0.6"/><path d="M656.6 163.0 L662.2 172.2" stroke="#9a6020" stroke-width="1.45"/><path d="M656.6 163.0 L662.2 172.2" stroke="#cf8c40" stroke-width="0.6"/><path d="M649.8 239.3 L649.8 166.2 L665.2 158.8 L665.2 231.8" fill="none" stroke="#9a6020" stroke-width="1.45"/><path d="M649.8 239.3 L649.8 166.2 L665.2 158.8 L665.2 231.8" fill="none" stroke="#cf8c40" stroke-width="0.6"/><path d="M649.8 166.2 L655.4 175.4" stroke="#9a6020" stroke-width="1.45"/><path d="M649.8 166.2 L655.4 175.4" stroke="#cf8c40" stroke-width="0.6"/><path d="M700.6 244.1 L700.6 171.1 L716.2 163.5 L716.2 236.6" fill="none" stroke="#9a6020" stroke-width="1.45"/><path d="M700.6 244.1 L700.6 171.1 L716.2 163.5 L716.2 236.6" fill="none" stroke="#cf8c40" stroke-width="0.6"/><path d="M700.6 171.1 L706.2 180.3" stroke="#9a6020" stroke-width="1.45"/><path d="M700.6 171.1 L706.2 180.3" stroke="#cf8c40" stroke-width="0.6"/><path d="M693.8 247.4 L693.8 174.4 L709.2 166.9 L709.2 239.9" fill="none" stroke="#9a6020" stroke-width="1.45"/><path d="M693.8 247.4 L693.8 174.4 L709.2 166.9 L709.2 239.9" fill="none" stroke="#cf8c40" stroke-width="0.6"/><path d="M693.8 174.4 L699.4 183.6" stroke="#9a6020" stroke-width="1.45"/><path d="M693.8 174.4 L699.4 183.6" stroke="#cf8c40" stroke-width="0.6"/><path d="M745.2 252.4 L745.2 179.3 L760.8 171.8 L760.8 244.8" fill="none" stroke="#9a6020" stroke-width="1.45"/><path d="M745.2 252.4 L745.2 179.3 L760.8 171.8 L760.8 244.8" fill="none" stroke="#cf8c40" stroke-width="0.6"/><path d="M745.2 179.3 L750.8 188.5" stroke="#9a6020" stroke-width="1.45"/><path d="M745.2 179.3 L750.8 188.5" stroke="#cf8c40" stroke-width="0.6"/><path d="M738.4 255.7 L738.4 182.6 L753.8 175.2 L753.8 248.2" fill="none" stroke="#9a6020" stroke-width="1.45"/><path d="M738.4 255.7 L738.4 182.6 L753.8 175.2 L753.8 248.2" fill="none" stroke="#cf8c40" stroke-width="0.6"/><path d="M738.4 182.6 L744.0 191.8" stroke="#9a6020" stroke-width="1.45"/><path d="M738.4 182.6 L744.0 191.8" stroke="#cf8c40" stroke-width="0.6"/><path d="M781.2 259.0 L781.2 186.0 L796.8 178.4 L796.8 251.5" fill="none" stroke="#9a6020" stroke-width="1.45"/><path d="M781.2 259.0 L781.2 186.0 L796.8 178.4 L796.8 251.5" fill="none" stroke="#cf8c40" stroke-width="0.6"/><path d="M781.2 186.0 L786.8 195.2" stroke="#9a6020" stroke-width="1.45"/><path d="M781.2 186.0 L786.8 195.2" stroke="#cf8c40" stroke-width="0.6"/><path d="M774.4 262.3 L774.4 189.3 L789.8 181.8 L789.8 254.8" fill="none" stroke="#9a6020" stroke-width="1.45"/><path d="M774.4 262.3 L774.4 189.3 L789.8 181.8 L789.8 254.8" fill="none" stroke="#cf8c40" stroke-width="0.6"/><path d="M774.4 189.3 L780.0 198.5" stroke="#9a6020" stroke-width="1.45"/><path d="M774.4 189.3 L780.0 198.5" stroke="#cf8c40" stroke-width="0.6"/><path d="M817.8 265.8 L817.8 192.8 L833.4 185.2 L833.4 258.2" fill="none" stroke="#9a6020" stroke-width="1.45"/><path d="M817.8 265.8 L817.8 192.8 L833.4 185.2 L833.4 258.2" fill="none" stroke="#cf8c40" stroke-width="0.6"/><path d="M817.8 192.8 L823.4 202.0" stroke="#9a6020" stroke-width="1.45"/><path d="M817.8 192.8 L823.4 202.0" stroke="#cf8c40" stroke-width="0.6"/><path d="M811.0 269.1 L811.0 196.1 L826.4 188.6 L826.4 261.6" fill="none" stroke="#9a6020" stroke-width="1.45"/><path d="M811.0 269.1 L811.0 196.1 L826.4 188.6 L826.4 261.6" fill="none" stroke="#cf8c40" stroke-width="0.6"/><path d="M811.0 196.1 L816.6 205.3" stroke="#9a6020" stroke-width="1.45"/><path d="M811.0 196.1 L816.6 205.3" stroke="#cf8c40" stroke-width="0.6"/><path d="M854.4 272.6 L854.4 199.6 L870.0 192.0 L870.0 265.0" fill="none" stroke="#9a6020" stroke-width="1.45"/><path d="M854.4 272.6 L854.4 199.6 L870.0 192.0 L870.0 265.0" fill="none" stroke="#cf8c40" stroke-width="0.6"/><path d="M854.4 199.6 L860.0 208.8" stroke="#9a6020" stroke-width="1.45"/><path d="M854.4 199.6 L860.0 208.8" stroke="#cf8c40" stroke-width="0.6"/><path d="M847.6 275.9 L847.6 202.8 L863.0 195.4 L863.0 268.4" fill="none" stroke="#9a6020" stroke-width="1.45"/><path d="M847.6 275.9 L847.6 202.8 L863.0 195.4 L863.0 268.4" fill="none" stroke="#cf8c40" stroke-width="0.6"/><path d="M847.6 202.8 L853.2 212.0" stroke="#9a6020" stroke-width="1.45"/><path d="M847.6 202.8 L853.2 212.0" stroke="#cf8c40" stroke-width="0.6"/><path d="M889.8 279.1 L889.8 206.1 L905.4 198.5 L905.4 271.6" fill="none" stroke="#9a6020" stroke-width="1.45"/><path d="M889.8 279.1 L889.8 206.1 L905.4 198.5 L905.4 271.6" fill="none" stroke="#cf8c40" stroke-width="0.6"/><path d="M889.8 206.1 L895.4 215.3" stroke="#9a6020" stroke-width="1.45"/><path d="M889.8 206.1 L895.4 215.3" stroke="#cf8c40" stroke-width="0.6"/><path d="M883.0 282.4 L883.0 209.4 L898.4 201.9 L898.4 274.9" fill="none" stroke="#9a6020" stroke-width="1.45"/><path d="M883.0 282.4 L883.0 209.4 L898.4 201.9 L898.4 274.9" fill="none" stroke="#cf8c40" stroke-width="0.6"/><path d="M883.0 209.4 L888.6 218.6" stroke="#9a6020" stroke-width="1.45"/><path d="M883.0 209.4 L888.6 218.6" stroke="#cf8c40" stroke-width="0.6"/><path d="M924.8 285.6 L924.8 212.6 L940.4 205.0 L940.4 278.0" fill="none" stroke="#9a6020" stroke-width="1.45"/><path d="M924.8 285.6 L924.8 212.6 L940.4 205.0 L940.4 278.0" fill="none" stroke="#cf8c40" stroke-width="0.6"/><path d="M924.8 212.6 L930.4 221.8" stroke="#9a6020" stroke-width="1.45"/><path d="M924.8 212.6 L930.4 221.8" stroke="#cf8c40" stroke-width="0.6"/><path d="M918.0 288.9 L918.0 215.9 L933.4 208.4 L933.4 281.4" fill="none" stroke="#9a6020" stroke-width="1.45"/><path d="M918.0 288.9 L918.0 215.9 L933.4 208.4 L933.4 281.4" fill="none" stroke="#cf8c40" stroke-width="0.6"/><path d="M918.0 215.9 L923.6 225.1" stroke="#9a6020" stroke-width="1.45"/><path d="M918.0 215.9 L923.6 225.1" stroke="#cf8c40" stroke-width="0.6"/><path d="M955.8 291.3 L955.8 218.3 L971.4 210.8 L971.4 283.8" fill="none" stroke="#9a6020" stroke-width="1.45"/><path d="M955.8 291.3 L955.8 218.3 L971.4 210.8 L971.4 283.8" fill="none" stroke="#cf8c40" stroke-width="0.6"/><path d="M955.8 218.3 L961.4 227.5" stroke="#9a6020" stroke-width="1.45"/><path d="M955.8 218.3 L961.4 227.5" stroke="#cf8c40" stroke-width="0.6"/><path d="M949.0 294.6 L949.0 221.6 L964.4 214.1 L964.4 287.1" fill="none" stroke="#9a6020" stroke-width="1.45"/><path d="M949.0 294.6 L949.0 221.6 L964.4 214.1 L964.4 287.1" fill="none" stroke="#cf8c40" stroke-width="0.6"/><path d="M949.0 221.6 L954.6 230.8" stroke="#9a6020" stroke-width="1.45"/><path d="M949.0 221.6 L954.6 230.8" stroke="#cf8c40" stroke-width="0.6"/><path d="M987.2 297.1 L987.2 224.1 L1002.8 216.6 L1002.8 289.6" fill="none" stroke="#9a6020" stroke-width="1.45"/><path d="M987.2 297.1 L987.2 224.1 L1002.8 216.6 L1002.8 289.6" fill="none" stroke="#cf8c40" stroke-width="0.6"/><path d="M987.2 224.1 L992.8 233.3" stroke="#9a6020" stroke-width="1.45"/><path d="M987.2 224.1 L992.8 233.3" stroke="#cf8c40" stroke-width="0.6"/><path d="M980.4 300.4 L980.4 227.4 L995.8 219.9 L995.8 293.0" fill="none" stroke="#9a6020" stroke-width="1.45"/><path d="M980.4 300.4 L980.4 227.4 L995.8 219.9 L995.8 293.0" fill="none" stroke="#cf8c40" stroke-width="0.6"/><path d="M980.4 227.4 L986.0 236.6" stroke="#9a6020" stroke-width="1.45"/><path d="M980.4 227.4 L986.0 236.6" stroke="#cf8c40" stroke-width="0.6"/></g><ellipse cx="993" cy="107" rx="21" ry="6.5" fill="none" stroke="#c9c9c9" stroke-width="2.2"/><path d="M978.5 91 L984 88.5 H1006 V107 L1001 114 H978.5 Z" fill="#eef2f8" stroke="#a9c6e8" stroke-width="0.8"/><path d="M978.5 91 H1001 V114 M1001 91 L1006 88.5" fill="none" stroke="#a9c6e8" stroke-width="0.8"/><text x="989.5" y="104" font-size="3.8" text-anchor="middle" fill="#8595ad" font-family="Liberation Sans">FRONT</text><text x="1003.5" y="103" font-size="3" text-anchor="middle" fill="#8595ad" font-family="Liberation Sans">LEFT</text><path d="M584.5 302 V288" stroke="#5a9ee0" stroke-width="1.8"/><path d="M581.5 290 L584.5 280.5 L587.5 290Z" fill="#5a9ee0"/><path d="M585 302.5 L592 298.5" stroke="#3a8a20" stroke-width="2.5"/><path d="M588.5 297.5 L597 296.5 L592 301Z" fill="#4a9a28"/><path d="M585 303 L597 305" stroke="#f07050" stroke-width="2"/><path d="M594.5 301.5 L603.5 305.8 L594.5 308Z" fill="#f07050"/><circle cx="584.3" cy="302.5" r="2.6" fill="#e86a50"/><text x="585.5" y="279" font-size="5" fill="#444" font-family="Liberation Sans">z</text><text x="598" y="296" font-size="5" fill="#444" font-family="Liberation Sans">Y</text><text x="604.5" y="304" font-size="5" fill="#444" font-family="Liberation Sans">x</text></svg>
<div class="a" style="left:600px;top:232px;width:152px;height:49.5px;background:rgba(250,250,250,0.72)"></div>
<div class="a" style="left:657.5px;top:235px;width:1px;height:44px;background:#777"></div>
<div class="t" style="left:609px;top:238.0px;font-size:8.1px;color:#222;transform:scaleX(0.94);transform-origin:0 0">Bar mark</div>
<div class="t" style="left:665.5px;top:238.0px;font-size:8.1px;color:#222;transform:scaleX(0.94);transform-origin:0 0">2</div>
<div class="t" style="left:609px;top:248.9px;font-size:8.1px;color:#222;transform:scaleX(0.94);transform-origin:0 0">Diameter</div>
<div class="t" style="left:665.5px;top:248.9px;font-size:8.1px;color:#222;transform:scaleX(0.94);transform-origin:0 0">H10</div>
<div class="t" style="left:609px;top:259.8px;font-size:8.1px;color:#222;transform:scaleX(0.94);transform-origin:0 0">Number</div>
<div class="t" style="left:665.5px;top:259.8px;font-size:8.1px;color:#222;transform:scaleX(0.94);transform-origin:0 0">4</div>
<div class="t" style="left:609px;top:270.7px;font-size:8.1px;color:#222;transform:scaleX(0.94);transform-origin:0 0">Type</div>
<div class="t" style="left:665.5px;top:270.7px;font-size:8.1px;color:#222;transform:scaleX(0.94);transform-origin:0 0">Bottom longitudinal</div>
<div class="a" style="left:850.2px;top:315px;width:13.5px;height:13.5px;background:#bcd9f2;border:1px solid #5a8ec8"></div>
<div class="a" style="left:866.3px;top:315px;width:13.5px;height:13.5px;background:rgba(255,255,255,0.95);border:1px solid #a8a8a8"></div>
<div class="a" style="left:882px;top:315px;width:13.5px;height:13.5px;background:rgba(255,255,255,0.95);border:1px solid #a8a8a8"></div>
<div class="a" style="left:897.6px;top:315px;width:13.5px;height:13.5px;background:rgba(255,255,255,0.95);border:1px solid #a8a8a8"></div>
<div class="a" style="left:913.3px;top:315px;width:13.5px;height:13.5px;background:rgba(255,255,255,0.95);border:1px solid #a8a8a8"></div>
<div class="a" style="left:929.4px;top:315px;width:13.5px;height:13.5px;background:rgba(255,255,255,0.95);border:1px solid #a8a8a8"></div>
<div class="a" style="left:945.2px;top:315px;width:13.5px;height:13.5px;background:rgba(255,255,255,0.95);border:1px solid #a8a8a8"></div>
<div class="a" style="left:961.1px;top:315px;width:13.5px;height:13.5px;background:#bcd9f2;border:1px solid #5a8ec8"></div>
<div class="a" style="left:976.9px;top:315px;width:13.5px;height:13.5px;background:rgba(255,255,255,0.95);border:1px solid #a8a8a8"></div>
<div class="a" style="left:992.6px;top:315px;width:13.5px;height:13.5px;background:rgba(255,255,255,0.95);border:1px solid #a8a8a8"></div>
<div class="a" style="left:1008.2px;top:315px;width:13.5px;height:13.5px;background:rgba(255,255,255,0.95);border:1px solid #a8a8a8"></div>
<svg style="left:0;top:0" width="1023" height="335"><text x="856.95" y="325.5" font-size="9.5" text-anchor="middle" fill="#3a6ad0" font-family="Liberation Sans">F</text><path d="M869.8 318 L875.8 324 M876.3 318 L870.3 324" stroke="#222" stroke-width="1"/><circle cx="870.3" cy="325" r="1.3" fill="none" stroke="#222" stroke-width="0.8"/><circle cx="875.8" cy="325" r="1.3" fill="none" stroke="#222" stroke-width="0.8"/><rect x="884.5" y="320" width="9" height="5" rx="1" fill="#222"/><rect x="886" y="317.5" width="6" height="3" fill="none" stroke="#222" stroke-width="0.8"/><rect x="886" y="323.5" width="6" height="3" fill="#fff" stroke="#222" stroke-width="0.7"/><path d="M900.1 317.5 H906.6 L908.6 319.5 V326 H900.1Z" fill="#222"/><rect x="901.6" y="318" width="4" height="3" fill="#fff"/><path d="M907.1 322 V326" stroke="#3a70c0" stroke-width="1.2"/><path d="M915.8 320 V317.5 H918.3 M921.8 317.5 H924.3 V320 M924.3 323.5 V326 H921.8 M918.3 326 H915.8 V323.5" stroke="#3a5a90" stroke-width="0.8" fill="none"/><rect x="931.9" y="319" width="7" height="7" fill="none" stroke="#3a5a90" stroke-width="0.8"/><rect x="933.9" y="317.5" width="7" height="7" fill="none" stroke="#3a5a90" stroke-width="0.8"/><path d="M948.2 320 L950.2 318 H956.2 V324 L954.2 326 H948.2Z" fill="#9fbde0"/><path d="M964.1 319 H970.1 V326 H964.1Z" fill="#9fbde0"/><path d="M970.1 319 L972.1 317.5 V324.5 L970.1 326Z" fill="#3a5a90"/><path d="M983.65 317.5 V324 M979.9 324 H987.4" stroke="#3a5a90" stroke-width="0.8"/><path d="M995.1 317.5 L998.6 321" stroke="#3a5a90" stroke-width="0.7"/><circle cx="1000.6" cy="323" r="2" fill="none" stroke="#222" stroke-width="0.8"/><path d="M1002.1 324.5 L1004.1 326.5" stroke="#222" stroke-width="1"/><path d="M1011.2 324 V320.5 H1018.7 V324 M1014.95 320.5 V324" stroke="#2a4a90" stroke-width="0.8" fill="none"/></svg>
<div class="a" style="left:556px;top:329px;width:467px;height:1px;background:#7b9ccc"></div>
<svg style="left:556px;top:330px" width="467" height="270" viewBox="556 330 467 270" font-family="Liberation Sans"><rect x="556" y="330" width="467" height="270" fill="#fff"/><path d="M631.3 343.5 H948.4 V443.5 H857.5 V570.2 H721.6 V443.5 H631.3 Z" fill="#b3b3b3" stroke="#505050" stroke-width="0.9"/><path d="M604 457.2 H767" stroke="#222" stroke-width="0.8"/><path d="M857.5 457.2 H975" stroke="#222" stroke-width="0.8"/><path d="M734.8 361.9 V552.5999999999999 Q734.8 557.8 740.0 557.8 H806.5999999999999 Q811.8 557.8 811.8 552.5999999999999 V361.9 Q811.8 356.7 806.5999999999999 356.7 H740.0 Q734.8 356.7 734.8 361.9 Z" fill="none" stroke="#6e5a30" stroke-width="4.2"/><path d="M734.8 361.9 V552.5999999999999 Q734.8 557.8 740.0 557.8 H806.5999999999999 Q811.8 557.8 811.8 552.5999999999999 V361.9 Q811.8 356.7 806.5999999999999 356.7 H740.0 Q734.8 356.7 734.8 361.9 Z" fill="none" stroke="#f59c12" stroke-width="2.8"/><path d="M767.8 361.9 V552.5999999999999 Q767.8 557.8 773.0 557.8 H839.9 Q845.1 557.8 845.1 552.5999999999999 V361.9 Q845.1 356.7 839.9 356.7 H773.0 Q767.8 356.7 767.8 361.9 Z" fill="none" stroke="#6e5a30" stroke-width="4.2"/><path d="M767.8 361.9 V552.5999999999999 Q767.8 557.8 773.0 557.8 H839.9 Q845.1 557.8 845.1 552.5999999999999 V361.9 Q845.1 356.7 839.9 356.7 H773.0 Q767.8 356.7 767.8 361.9 Z" fill="none" stroke="#f59c12" stroke-width="2.8"/><path d="M790 356.7 H806.6 Q811.8 356.7 811.8 361.9 V375" fill="none" stroke="#6e5a30" stroke-width="4.2"/><path d="M789 356.7 H806.6 Q811.8 356.7 811.8 361.9 V376" fill="none" stroke="#f59c12" stroke-width="2.8"/><path d="M806.3 359 L772 389" stroke="#6e5a30" stroke-width="4" stroke-linecap="butt"/><path d="M806.3 359 L772.6 388.5" stroke="#f59c12" stroke-width="2.6"/><path d="M810.5 365 L779.6 396.5" stroke="#6e5a30" stroke-width="4" stroke-linecap="butt"/><path d="M810.5 365 L780.2 396.0" stroke="#f59c12" stroke-width="2.6"/><path d="M839.4 359 L805 389" stroke="#6e5a30" stroke-width="4" stroke-linecap="butt"/><path d="M839.4 359 L805.6 388.5" stroke="#f59c12" stroke-width="2.6"/><path d="M843.5 365 L814 396" stroke="#6e5a30" stroke-width="4" stroke-linecap="butt"/><path d="M843.5 365 L814.6 395.5" stroke="#f59c12" stroke-width="2.6"/><circle cx="740.2" cy="360.2" r="2.3" fill="#1a2ae0" stroke="#102060" stroke-width="0.5"/><circle cx="740.2" cy="553.9" r="2.6" fill="#20b020" stroke="#205020" stroke-width="0.6"/><circle cx="740.2" cy="548" r="2.6" fill="#f8f800" stroke="#606020" stroke-width="0.6"/><circle cx="773.2" cy="360.2" r="2.3" fill="#1a2ae0" stroke="#102060" stroke-width="0.5"/><circle cx="773.2" cy="553.9" r="2.6" fill="#20b020" stroke="#205020" stroke-width="0.6"/><circle cx="773.2" cy="548" r="2.6" fill="#f8f800" stroke="#606020" stroke-width="0.6"/><circle cx="806.3" cy="360.2" r="2.3" fill="#1a2ae0" stroke="#102060" stroke-width="0.5"/><circle cx="806.3" cy="553.9" r="2.6" fill="#20b020" stroke="#205020" stroke-width="0.6"/><circle cx="806.3" cy="548" r="2.6" fill="#f8f800" stroke="#606020" stroke-width="0.6"/><circle cx="839.4" cy="360.2" r="2.3" fill="#1a2ae0" stroke="#102060" stroke-width="0.5"/><circle cx="839.4" cy="553.9" r="2.6" fill="#20b020" stroke="#205020" stroke-width="0.6"/><circle cx="839.4" cy="548" r="2.6" fill="#f8f800" stroke="#606020" stroke-width="0.6"/><path d="M615.7 340 V571 M615.7 343.5 H628 M615.7 443.5 H628" stroke="#333" stroke-width="0.8" fill="none"/><path d="M611 348 L621 338.5 M611 448 L621 438.5 M611 574.5 L621 565" stroke="#333" stroke-width="0.8"/><path d="M615.7 570.2 H627" stroke="#333" stroke-width="0.8"/><text transform="translate(613.3,393) rotate(-90) scale(0.93,1)" font-size="7.8" text-anchor="middle" fill="#222">220</text><text transform="translate(613.3,507) rotate(-90) scale(0.93,1)" font-size="7.8" text-anchor="middle" fill="#222">(280)</text><text transform="translate(600.8,423) rotate(-90)" font-size="7" text-anchor="middle" fill="#222">25 H6 L=1,3 m</text><circle cx="598.6" cy="457.2" r="5.3" fill="#fff" stroke="#e03a3a" stroke-width="0.8"/><text x="598.6" y="460" font-size="7.6" text-anchor="middle" fill="#222">6</text><path d="M963.3 340 V571 M950.5 343.5 H963.3 M950.5 443.5 H963.3 M951 570.2 H963.3" stroke="#333" stroke-width="0.8" fill="none"/><path d="M958.5 348 L968.5 338.5 M958.5 448 L968.5 438.5 M958.5 574.5 L968.5 565" stroke="#333" stroke-width="0.8"/><text transform="translate(961,393) rotate(-90) scale(0.93,1)" font-size="7.8" text-anchor="middle" fill="#222">220</text><text transform="translate(961,507) rotate(-90) scale(0.93,1)" font-size="7.8" text-anchor="middle" fill="#222">(280)</text><text transform="translate(982.7,421.6) rotate(-90)" font-size="7" text-anchor="middle" fill="#222">25 H6 L=1,59 m</text><circle cx="981" cy="457.2" r="5.3" fill="#fff" stroke="#e03a3a" stroke-width="0.8"/><text x="981" y="460" font-size="7.6" text-anchor="middle" fill="#222">5</text><path d="M631 585.3 H948" stroke="#333" stroke-width="0.8"/><path d="M631 573.5 V585.3 M626 580.3 L636 590.3" stroke="#333" stroke-width="0.8"/><path d="M721.6 573.5 V585.3 M716.6 580.3 L726.6 590.3" stroke="#333" stroke-width="0.8"/><path d="M857.5 573.5 V585.3 M852.5 580.3 L862.5 590.3" stroke="#333" stroke-width="0.8"/><path d="M948 573.5 V585.3 M943 580.3 L953 590.3" stroke="#333" stroke-width="0.8"/><text transform="translate(676,583.3) scale(0.93,1)" font-size="7.8" text-anchor="middle" fill="#222">200</text><text transform="translate(789.8,583.3) scale(0.93,1)" font-size="7.8" text-anchor="middle" fill="#222">300</text><text transform="translate(903,583.3) scale(0.93,1)" font-size="7.8" text-anchor="middle" fill="#222">200</text><rect x="992" y="344.5" width="22.3" height="22.3" fill="#fff" stroke="#c9d9ec" stroke-width="1"/><path d="M995.1 348.7 H1011.2 V366 M995.1 348.7 V366 M992 344.5 L995.1 348.7 M1014.3 344.5 L1011.2 348.7" fill="none" stroke="#dbe6f3" stroke-width="0.8"/><text x="1003.1" y="358.8" font-size="4.6" text-anchor="middle" fill="#7f93b3" transform="translate(1003.1,0) scale(0.8,1) translate(-1003.1,0)">LEFT</text><path d="M584 571 V553" stroke="#4a90e0" stroke-width="1.8"/><path d="M581 555 L584 547 L587 555Z" fill="#4a90e0"/><path d="M584 572.5 H568" stroke="#6a9a30" stroke-width="1.8"/><path d="M569 569.5 L561 572.5 L569 575.5Z" fill="#6a9a30"/><circle cx="584" cy="572.5" r="2.2" fill="#e06050"/><text x="586" y="549" font-size="4.5" fill="#444">z</text><text x="563" y="570" font-size="4.5" fill="#444">Y</text><text x="586" y="571" font-size="4" fill="#444">x</text></svg>
<div class="t" style="left:559px;top:588.5px;font-size:7.8px;color:#222;transform:scaleX(0.875);transform-origin:0 0">Section abscissa:</div>
<div class="a" style="left:615.5px;top:583px;width:34.5px;height:15px;border:1px solid #c8c8c8;background:rgba(255,255,255,0.6)"></div>
<div class="t" style="left:617px;top:587.5px;font-size:7.8px;color:#222;transform:scaleX(0.93);transform-origin:0 0">3650 mm</div>
<div class="t" style="left:655.5px;top:588.5px;font-size:7.8px;color:#222;transform:scaleX(0.89);transform-origin:0 0">Section depth:</div>
<div class="a" style="left:705px;top:583px;width:29.5px;height:15px;border:1px solid #c8c8c8;background:rgba(255,255,255,0.6)"></div>
<div class="t" style="left:706.5px;top:587.5px;font-size:7.8px;color:#222;transform:scaleX(0.93);transform-origin:0 0">300 mm</div>
<svg style="left:0;top:0" width="1023" height="600"><path d="M626 580.3 L636 590.3 M716.6 580.3 L726.6 590.3 M631 585.3 H649 M705 585.3 H734" stroke="#333" stroke-width="0.8"/></svg>
<div class="a" style="left:882px;top:584.7px;width:13px;height:13px;background:#fff;border:1px solid #a8a8a8"></div>
<div class="a" style="left:897.7px;top:584.7px;width:13px;height:13px;background:#fff;border:1px solid #a8a8a8"></div>
<div class="a" style="left:913.7px;top:584.7px;width:13px;height:13px;background:#fff;border:1px solid #a8a8a8"></div>
<div class="a" style="left:929.5px;top:584.7px;width:13px;height:13px;background:#fff;border:1px solid #a8a8a8"></div>
<div class="a" style="left:945.2px;top:584.7px;width:13px;height:13px;background:#bcd9f2;border:1px solid #5a8ec8"></div>
<div class="a" style="left:961.2px;top:584.7px;width:13px;height:13px;background:#bcd9f2;border:1px solid #5a8ec8"></div>
<div class="a" style="left:977px;top:584.7px;width:13px;height:13px;background:#bcd9f2;border:1px solid #5a8ec8"></div>
<div class="a" style="left:992.6px;top:584.7px;width:13px;height:13px;background:#fff;border:1px solid #a8a8a8"></div>
<div class="a" style="left:1008.3px;top:584.7px;width:13px;height:13px;background:#bcd9f2;border:1px solid #5a8ec8"></div>
<svg style="left:0;top:0" width="1023" height="600"><rect x="884.5" y="589.7" width="8.5" height="5" rx="1" fill="#222"/><rect x="886" y="587.2" width="5.5" height="3" fill="none" stroke="#222" stroke-width="0.8"/><rect x="886" y="593.2" width="5.5" height="3" fill="#fff" stroke="#222" stroke-width="0.7"/><path d="M900.2 587.2 H906.2 L908.2 589.2 V595.2 H900.2Z" fill="#222"/><rect x="901.7" y="587.7" width="4" height="3" fill="#fff"/><path d="M906.7 591.7 V595.7" stroke="#3a70c0" stroke-width="1.2"/><path d="M916.2 589.7 V587.2 H918.7 M921.7 587.2 H924.2 V589.7 M924.2 592.7 V595.2 H921.7 M918.7 595.2 H916.2 V592.7" stroke="#3a5a90" stroke-width="0.8" fill="none"/><rect x="932.0" y="588.7" width="6.5" height="6.5" fill="none" stroke="#3a5a90" stroke-width="0.8"/><rect x="934.0" y="587.2" width="6.5" height="6.5" fill="none" stroke="#3a5a90" stroke-width="0.8"/><path d="M947.2 588.7 L949.2 586.7 H956.2 V593.7 L954.2 595.7 H947.2Z" fill="#8fb0dc"/><path d="M967.7 587.2 V593.7 M964.2 593.7 H971.2" stroke="#3a5a90" stroke-width="0.8"/><path d="M981 587.2 V595.2" stroke="#3a5a90" stroke-width="0.8"/><text x="985.3" y="594.0" font-size="6.5" text-anchor="middle" fill="#3a5a90" font-family="Liberation Sans">H</text><path d="M995.1 587.2 L998.6 590.7" stroke="#3a5a90" stroke-width="0.7"/><circle cx="1000.6" cy="592.7" r="2" fill="none" stroke="#222" stroke-width="0.8"/><path d="M1002.1 594.2 L1004.1 596.2" stroke="#222" stroke-width="1"/><circle cx="1014.8" cy="591.2" r="4.3" fill="none" stroke="#333" stroke-width="0.8"/><rect x="1014.3" y="590.0" width="1.1" height="3.5" fill="#222"/><circle cx="1014.8" cy="588.8000000000001" r="0.6" fill="#222"/></svg>
</body></html>
